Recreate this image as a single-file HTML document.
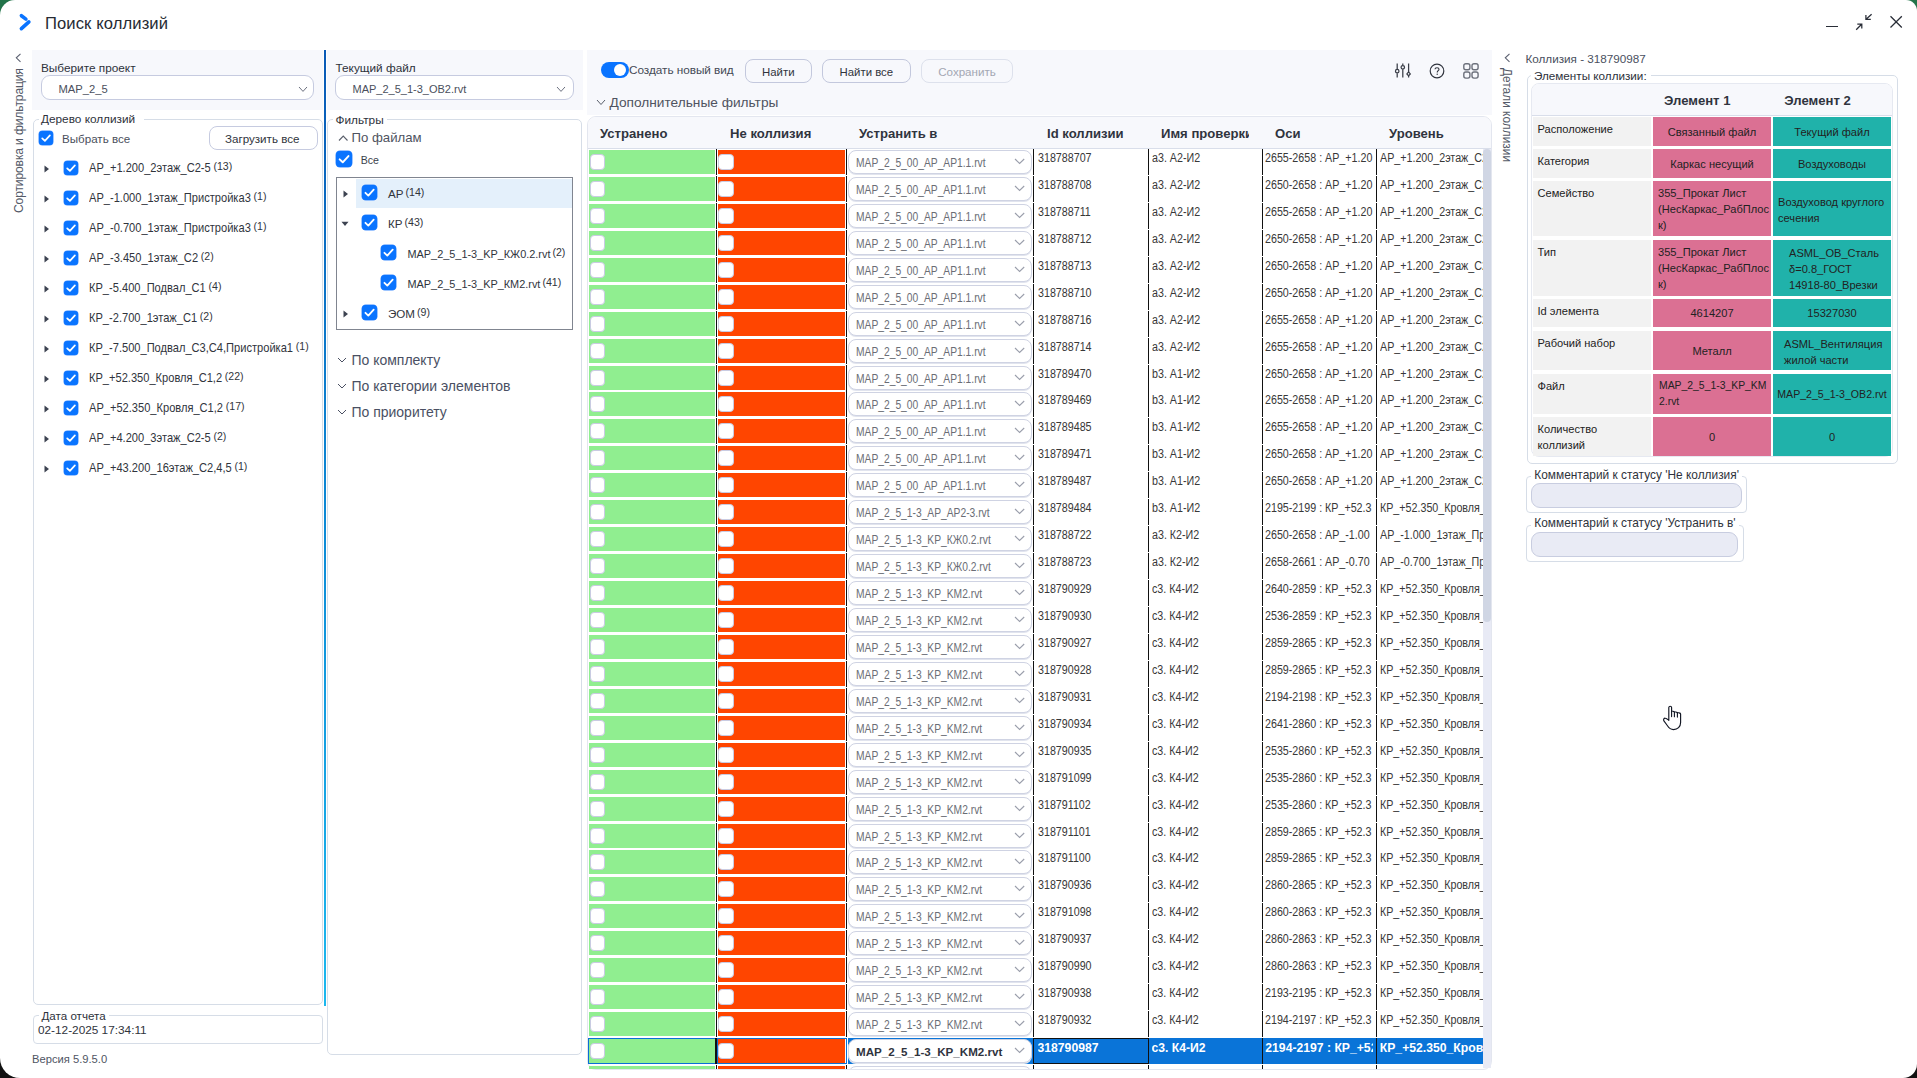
<!DOCTYPE html>
<html><head><meta charset="utf-8"><title>Поиск коллизий</title>
<style>
html,body{margin:0;padding:0;width:1917px;height:1078px;overflow:hidden}
body{background:linear-gradient(#23744a 0,#23744a 50%,#111 50%,#111 100%);font-family:"Liberation Sans",sans-serif}
#win{position:absolute;left:0;top:0;width:1917px;height:1078px;background:#fff;border-radius:15px 11px 14px 20px;overflow:hidden}
.a{position:absolute}
.sx{display:inline-block;transform-origin:0 0}
.t{position:absolute;white-space:nowrap;font-family:"Liberation Sans",sans-serif}
.cb{background:#0a74ff;box-shadow:0 0 0 0.5px #3d8bff}
.ucb{width:15.6px;height:16px;background:#fff;border:1px solid #c9cbe2;border-radius:4px;box-sizing:border-box}
.dd{background:#fff;border:1px solid #cfd3e3;border-radius:8px;box-sizing:border-box;box-shadow:0 1px 0 #e1e4ee}
</style></head>
<body><div id="win">
<svg class="a" style="left:16px;top:12px" width="18" height="20" viewBox="0 0 18 20"><g fill="none" stroke="#0a74ff" stroke-width="3.6" stroke-linecap="round"><path d="M5.4 3.7 L9.9 7.1"/><path d="M12.9 9.9 L5.4 16.7"/></g></svg>
<div class="t " style="left:45px;top:16.15px;font-size:16.6px;line-height:16.6px;color:#262a33;font-weight:400;letter-spacing:0.1px">Поиск коллизий</div>
<div class="a" style="left:1826px;top:25.8px;width:12px;height:1.4px;background:#2a2e38"></div>
<svg class="a" style="left:1850px;top:10px" width="26" height="24" viewBox="1850 10 26 24"><g fill="none" stroke="#2a2e38" stroke-width="1.25"><path d="M1856.2 29.8 L1861.6 24.3 M1857.3 24.1 L1861.8 24.1 L1861.8 28.6"/><path d="M1871.6 14.3 L1866.1 19.3 M1870.8 19.4 L1865.9 19.4 L1865.9 15.0"/></g></svg>
<svg class="a" style="left:1888.8px;top:15px" width="14" height="14" viewBox="0 0 14 14"><path d="M1.5 1.2 L12.8 12.5 M12.8 1.2 L1.5 12.5" fill="none" stroke="#2a2e38" stroke-width="1.3"/></svg>
<svg class="a" style="left:15px;top:53px" width="7" height="10" viewBox="0 0 7 10"><path d="M5.5 0.8 L1.3 4.8 L5.5 8.8" fill="none" stroke="#5b6070" stroke-width="1.1"/></svg>
<div class="t" style="left:19.2px;top:212.8px;font-size:12.1px;letter-spacing:-0.15px;line-height:12px;color:#545a68;transform-origin:0 0;transform:rotate(-90deg) translate(0,-6px);white-space:nowrap">Сортировка и фильтрация</div>
<div class="a" style="left:32px;top:50px;width:291px;height:60px;background:#f7f8fc"></div>
<div class="t " style="left:41px;top:62.51px;font-size:11.8px;line-height:11.8px;color:#2e323b;font-weight:400;">Выберите проект</div>
<div class="a" style="left:41px;top:75px;width:273px;height:25px;background:#fff;border:1px solid #c6cbe0;border-radius:9px;box-sizing:border-box"></div>
<div class="t " style="left:58.5px;top:83.52px;font-size:11.2px;line-height:11.2px;color:#4a4f5c;font-weight:400;">MAP_2_5</div>
<svg class="a" style="left:297.8px;top:85.8px" width="10" height="6.4" viewBox="-1 -1 10 6.4"><path d="M0 0 L4.0 4.4 L8 0" fill="none" stroke="#6b7080" stroke-width="1.0"/></svg>
<div class="a" style="left:33px;top:119px;width:290px;height:886px;border:1px solid #d6dde7;border-radius:5px;box-sizing:border-box"></div>
<div class="a" style="left:39px;top:113px;width:105px;height:12px;background:#fff"></div>
<div class="t " style="left:41px;top:114.41px;font-size:11.8px;line-height:11.8px;color:#2e323b;font-weight:400;">Дерево коллизий</div>
<div class="a cb" style="left:39px;top:131px;width:14px;height:14px;border-radius:3.5px"><svg width="14" height="14" viewBox="0 0 14 14" style="position:absolute;left:0;top:0"><path d="M3.2 7.3 L5.9 9.9 L10.9 4.4" fill="none" stroke="#fff" stroke-width="1.7" stroke-linecap="round" stroke-linejoin="round"/></svg></div>
<div class="t " style="left:62px;top:133.18px;font-size:11.6px;line-height:11.6px;color:#4a4f5c;font-weight:400;">Выбрать все</div>
<div class="a" style="left:209px;top:126px;width:109px;height:24px;background:#fff;border:1px solid #c6cbe0;border-radius:8px;box-sizing:border-box"></div>
<div class="t " style="left:225px;top:133.18px;font-size:11.6px;line-height:11.6px;color:#30343c;font-weight:400;">Загрузить все</div>
<svg class="a" style="left:43.5px;top:165px" width="6" height="8" viewBox="0 0 6 8"><path d="M0.5 0.5 L5 4 L0.5 7.5 Z" fill="#3c4250"/></svg>
<div class="a cb" style="left:64px;top:161px;width:14px;height:14px;border-radius:3.5px"><svg width="14" height="14" viewBox="0 0 14 14" style="position:absolute;left:0;top:0"><path d="M3.2 7.3 L5.9 9.9 L10.9 4.4" fill="none" stroke="#fff" stroke-width="1.7" stroke-linecap="round" stroke-linejoin="round"/></svg></div>
<div class="t" style="left:89px;top:161.8px;font-size:12.2px;line-height:12px;color:#30343c;white-space:nowrap"><span class="sx" style="transform:scaleX(0.91)">АР_+1.200_2этаж_С2-5<span style="font-size:11.6px;position:relative;top:-1.5px;margin-left:3px">(13)</span></span></div>
<svg class="a" style="left:43.5px;top:195px" width="6" height="8" viewBox="0 0 6 8"><path d="M0.5 0.5 L5 4 L0.5 7.5 Z" fill="#3c4250"/></svg>
<div class="a cb" style="left:64px;top:191px;width:14px;height:14px;border-radius:3.5px"><svg width="14" height="14" viewBox="0 0 14 14" style="position:absolute;left:0;top:0"><path d="M3.2 7.3 L5.9 9.9 L10.9 4.4" fill="none" stroke="#fff" stroke-width="1.7" stroke-linecap="round" stroke-linejoin="round"/></svg></div>
<div class="t" style="left:89px;top:191.8px;font-size:12.2px;line-height:12px;color:#30343c;white-space:nowrap"><span class="sx" style="transform:scaleX(0.91)">АР_-1.000_1этаж_Пристройка3<span style="font-size:11.6px;position:relative;top:-1.5px;margin-left:3px">(1)</span></span></div>
<svg class="a" style="left:43.5px;top:225px" width="6" height="8" viewBox="0 0 6 8"><path d="M0.5 0.5 L5 4 L0.5 7.5 Z" fill="#3c4250"/></svg>
<div class="a cb" style="left:64px;top:221px;width:14px;height:14px;border-radius:3.5px"><svg width="14" height="14" viewBox="0 0 14 14" style="position:absolute;left:0;top:0"><path d="M3.2 7.3 L5.9 9.9 L10.9 4.4" fill="none" stroke="#fff" stroke-width="1.7" stroke-linecap="round" stroke-linejoin="round"/></svg></div>
<div class="t" style="left:89px;top:221.8px;font-size:12.2px;line-height:12px;color:#30343c;white-space:nowrap"><span class="sx" style="transform:scaleX(0.91)">АР_-0.700_1этаж_Пристройка3<span style="font-size:11.6px;position:relative;top:-1.5px;margin-left:3px">(1)</span></span></div>
<svg class="a" style="left:43.5px;top:255px" width="6" height="8" viewBox="0 0 6 8"><path d="M0.5 0.5 L5 4 L0.5 7.5 Z" fill="#3c4250"/></svg>
<div class="a cb" style="left:64px;top:251px;width:14px;height:14px;border-radius:3.5px"><svg width="14" height="14" viewBox="0 0 14 14" style="position:absolute;left:0;top:0"><path d="M3.2 7.3 L5.9 9.9 L10.9 4.4" fill="none" stroke="#fff" stroke-width="1.7" stroke-linecap="round" stroke-linejoin="round"/></svg></div>
<div class="t" style="left:89px;top:251.8px;font-size:12.2px;line-height:12px;color:#30343c;white-space:nowrap"><span class="sx" style="transform:scaleX(0.91)">АР_-3.450_1этаж_С2<span style="font-size:11.6px;position:relative;top:-1.5px;margin-left:3px">(2)</span></span></div>
<svg class="a" style="left:43.5px;top:285px" width="6" height="8" viewBox="0 0 6 8"><path d="M0.5 0.5 L5 4 L0.5 7.5 Z" fill="#3c4250"/></svg>
<div class="a cb" style="left:64px;top:281px;width:14px;height:14px;border-radius:3.5px"><svg width="14" height="14" viewBox="0 0 14 14" style="position:absolute;left:0;top:0"><path d="M3.2 7.3 L5.9 9.9 L10.9 4.4" fill="none" stroke="#fff" stroke-width="1.7" stroke-linecap="round" stroke-linejoin="round"/></svg></div>
<div class="t" style="left:89px;top:281.8px;font-size:12.2px;line-height:12px;color:#30343c;white-space:nowrap"><span class="sx" style="transform:scaleX(0.91)">КР_-5.400_Подвал_С1<span style="font-size:11.6px;position:relative;top:-1.5px;margin-left:3px">(4)</span></span></div>
<svg class="a" style="left:43.5px;top:315px" width="6" height="8" viewBox="0 0 6 8"><path d="M0.5 0.5 L5 4 L0.5 7.5 Z" fill="#3c4250"/></svg>
<div class="a cb" style="left:64px;top:311px;width:14px;height:14px;border-radius:3.5px"><svg width="14" height="14" viewBox="0 0 14 14" style="position:absolute;left:0;top:0"><path d="M3.2 7.3 L5.9 9.9 L10.9 4.4" fill="none" stroke="#fff" stroke-width="1.7" stroke-linecap="round" stroke-linejoin="round"/></svg></div>
<div class="t" style="left:89px;top:311.8px;font-size:12.2px;line-height:12px;color:#30343c;white-space:nowrap"><span class="sx" style="transform:scaleX(0.91)">КР_-2.700_1этаж_С1<span style="font-size:11.6px;position:relative;top:-1.5px;margin-left:3px">(2)</span></span></div>
<svg class="a" style="left:43.5px;top:345px" width="6" height="8" viewBox="0 0 6 8"><path d="M0.5 0.5 L5 4 L0.5 7.5 Z" fill="#3c4250"/></svg>
<div class="a cb" style="left:64px;top:341px;width:14px;height:14px;border-radius:3.5px"><svg width="14" height="14" viewBox="0 0 14 14" style="position:absolute;left:0;top:0"><path d="M3.2 7.3 L5.9 9.9 L10.9 4.4" fill="none" stroke="#fff" stroke-width="1.7" stroke-linecap="round" stroke-linejoin="round"/></svg></div>
<div class="t" style="left:89px;top:341.8px;font-size:12.2px;line-height:12px;color:#30343c;white-space:nowrap"><span class="sx" style="transform:scaleX(0.91)">КР_-7.500_Подвал_С3,С4,Пристройка1<span style="font-size:11.6px;position:relative;top:-1.5px;margin-left:3px">(1)</span></span></div>
<svg class="a" style="left:43.5px;top:375px" width="6" height="8" viewBox="0 0 6 8"><path d="M0.5 0.5 L5 4 L0.5 7.5 Z" fill="#3c4250"/></svg>
<div class="a cb" style="left:64px;top:371px;width:14px;height:14px;border-radius:3.5px"><svg width="14" height="14" viewBox="0 0 14 14" style="position:absolute;left:0;top:0"><path d="M3.2 7.3 L5.9 9.9 L10.9 4.4" fill="none" stroke="#fff" stroke-width="1.7" stroke-linecap="round" stroke-linejoin="round"/></svg></div>
<div class="t" style="left:89px;top:371.8px;font-size:12.2px;line-height:12px;color:#30343c;white-space:nowrap"><span class="sx" style="transform:scaleX(0.91)">КР_+52.350_Кровля_С1,2<span style="font-size:11.6px;position:relative;top:-1.5px;margin-left:3px">(22)</span></span></div>
<svg class="a" style="left:43.5px;top:405px" width="6" height="8" viewBox="0 0 6 8"><path d="M0.5 0.5 L5 4 L0.5 7.5 Z" fill="#3c4250"/></svg>
<div class="a cb" style="left:64px;top:401px;width:14px;height:14px;border-radius:3.5px"><svg width="14" height="14" viewBox="0 0 14 14" style="position:absolute;left:0;top:0"><path d="M3.2 7.3 L5.9 9.9 L10.9 4.4" fill="none" stroke="#fff" stroke-width="1.7" stroke-linecap="round" stroke-linejoin="round"/></svg></div>
<div class="t" style="left:89px;top:401.8px;font-size:12.2px;line-height:12px;color:#30343c;white-space:nowrap"><span class="sx" style="transform:scaleX(0.91)">АР_+52.350_Кровля_С1,2<span style="font-size:11.6px;position:relative;top:-1.5px;margin-left:3px">(17)</span></span></div>
<svg class="a" style="left:43.5px;top:435px" width="6" height="8" viewBox="0 0 6 8"><path d="M0.5 0.5 L5 4 L0.5 7.5 Z" fill="#3c4250"/></svg>
<div class="a cb" style="left:64px;top:431px;width:14px;height:14px;border-radius:3.5px"><svg width="14" height="14" viewBox="0 0 14 14" style="position:absolute;left:0;top:0"><path d="M3.2 7.3 L5.9 9.9 L10.9 4.4" fill="none" stroke="#fff" stroke-width="1.7" stroke-linecap="round" stroke-linejoin="round"/></svg></div>
<div class="t" style="left:89px;top:431.8px;font-size:12.2px;line-height:12px;color:#30343c;white-space:nowrap"><span class="sx" style="transform:scaleX(0.91)">АР_+4.200_3этаж_С2-5<span style="font-size:11.6px;position:relative;top:-1.5px;margin-left:3px">(2)</span></span></div>
<svg class="a" style="left:43.5px;top:465px" width="6" height="8" viewBox="0 0 6 8"><path d="M0.5 0.5 L5 4 L0.5 7.5 Z" fill="#3c4250"/></svg>
<div class="a cb" style="left:64px;top:461px;width:14px;height:14px;border-radius:3.5px"><svg width="14" height="14" viewBox="0 0 14 14" style="position:absolute;left:0;top:0"><path d="M3.2 7.3 L5.9 9.9 L10.9 4.4" fill="none" stroke="#fff" stroke-width="1.7" stroke-linecap="round" stroke-linejoin="round"/></svg></div>
<div class="t" style="left:89px;top:461.8px;font-size:12.2px;line-height:12px;color:#30343c;white-space:nowrap"><span class="sx" style="transform:scaleX(0.91)">АР_+43.200_16этаж_С2,4,5<span style="font-size:11.6px;position:relative;top:-1.5px;margin-left:3px">(1)</span></span></div>
<div class="a" style="left:33px;top:1015px;width:290px;height:29px;border:1px solid #d6dde7;border-radius:4px;box-sizing:border-box"></div>
<div class="a" style="left:39px;top:1009px;width:70px;height:10px;background:#fff"></div>
<div class="t " style="left:41.5px;top:1009.88px;font-size:11.6px;line-height:11.6px;color:#2e323b;font-weight:400;">Дата отчета</div>
<div class="t " style="left:38px;top:1025.31px;font-size:11.8px;line-height:11.8px;color:#30343c;font-weight:400;">02-12-2025 17:34:11</div>
<div class="t " style="left:32px;top:1053.82px;font-size:11.2px;line-height:11.2px;color:#4f5563;font-weight:400;">Версия 5.9.5.0</div>
<div class="a" style="left:324px;top:50px;width:2px;height:956px;background:linear-gradient(#0a5ab6,#0c8ad6 50%,#1cb8ee)"></div>
<div class="a" style="left:327px;top:50px;width:256px;height:60px;background:#f7f8fc"></div>
<div class="t " style="left:335.5px;top:62.51px;font-size:11.8px;line-height:11.8px;color:#2e323b;font-weight:400;">Текущий файл</div>
<div class="a" style="left:335px;top:75px;width:239px;height:25px;background:#fff;border:1px solid #c6cbe0;border-radius:9px;box-sizing:border-box"></div>
<div class="t " style="left:352.5px;top:83.69px;font-size:11.0px;line-height:11.0px;color:#4a4f5c;font-weight:400;">MAP_2_5_1-3_OB2.rvt</div>
<svg class="a" style="left:555.6px;top:85.8px" width="10" height="6.4" viewBox="-1 -1 10 6.4"><path d="M0 0 L4.0 4.4 L8 0" fill="none" stroke="#6b7080" stroke-width="1.0"/></svg>
<div class="a" style="left:327px;top:119px;width:255px;height:936px;border:1px solid #d6dde7;border-radius:5px;box-sizing:border-box"></div>
<div class="a" style="left:333px;top:113px;width:54px;height:12px;background:#fff"></div>
<div class="t " style="left:335.5px;top:114.61px;font-size:11.8px;line-height:11.8px;color:#2e323b;font-weight:400;">Фильтры</div>
<svg class="a" style="left:337.5px;top:134.5px" width="10.5" height="6.5" viewBox="-1 -1 10.5 6.5"><path d="M0 4.5 L4.25 0 L8.5 4.5" fill="none" stroke="#5a5f6b" stroke-width="1.1"/></svg>
<div class="t " style="left:351.5px;top:130.83px;font-size:13.2px;line-height:13.2px;color:#4f5360;font-weight:400;">По файлам</div>
<div class="a cb" style="left:336px;top:151px;width:16px;height:16px;border-radius:4.0px"><svg width="16" height="16" viewBox="0 0 14 14" style="position:absolute;left:0;top:0"><path d="M3.2 7.3 L5.9 9.9 L10.9 4.4" fill="none" stroke="#fff" stroke-width="1.7" stroke-linecap="round" stroke-linejoin="round"/></svg></div>
<div class="t " style="left:360.7px;top:154.83px;font-size:10.6px;line-height:10.6px;color:#3a3f4c;font-weight:400;">Все</div>
<div class="a" style="left:336px;top:177px;width:237px;height:153px;border:1px solid #808590;box-sizing:border-box"></div>
<div class="a" style="left:356px;top:179px;width:216px;height:29px;background:#e4f0fb"></div>
<svg class="a" style="left:342.5px;top:190px" width="6" height="8" viewBox="0 0 6 8"><path d="M0.5 0.5 L5 4 L0.5 7.5 Z" fill="#3c4250"/></svg>
<div class="a cb" style="left:362px;top:185px;width:15px;height:15px;border-radius:3.75px"><svg width="15" height="15" viewBox="0 0 14 14" style="position:absolute;left:0;top:0"><path d="M3.2 7.3 L5.9 9.9 L10.9 4.4" fill="none" stroke="#fff" stroke-width="1.7" stroke-linecap="round" stroke-linejoin="round"/></svg></div>
<div class="t" style="left:388px;top:187.5px;font-size:11.6px;line-height:12px;color:#30343c;white-space:nowrap">АР<span style="font-size:10.6px;position:relative;top:-1.5px;margin-left:2px">(14)</span></div>
<svg class="a" style="left:341px;top:221px" width="8" height="6" viewBox="0 0 8 6"><path d="M0.5 0.8 L7.5 0.8 L4 5 Z" fill="#3c4250"/></svg>
<div class="a cb" style="left:362px;top:215px;width:15px;height:15px;border-radius:3.75px"><svg width="15" height="15" viewBox="0 0 14 14" style="position:absolute;left:0;top:0"><path d="M3.2 7.3 L5.9 9.9 L10.9 4.4" fill="none" stroke="#fff" stroke-width="1.7" stroke-linecap="round" stroke-linejoin="round"/></svg></div>
<div class="t" style="left:388px;top:217.5px;font-size:11.6px;line-height:12px;color:#30343c;white-space:nowrap">КР<span style="font-size:10.6px;position:relative;top:-1.5px;margin-left:2px">(43)</span></div>
<div class="a cb" style="left:381px;top:245px;width:15px;height:15px;border-radius:3.75px"><svg width="15" height="15" viewBox="0 0 14 14" style="position:absolute;left:0;top:0"><path d="M3.2 7.3 L5.9 9.9 L10.9 4.4" fill="none" stroke="#fff" stroke-width="1.7" stroke-linecap="round" stroke-linejoin="round"/></svg></div>
<div class="t" style="left:407.5px;top:247.5px;font-size:10.9px;line-height:12px;color:#30343c;white-space:nowrap">MAP_2_5_1-3_KP_КЖ0.2.rvt<span style="font-size:10.6px;position:relative;top:-1.5px;margin-left:2px">(2)</span></div>
<div class="a cb" style="left:381px;top:275px;width:15px;height:15px;border-radius:3.75px"><svg width="15" height="15" viewBox="0 0 14 14" style="position:absolute;left:0;top:0"><path d="M3.2 7.3 L5.9 9.9 L10.9 4.4" fill="none" stroke="#fff" stroke-width="1.7" stroke-linecap="round" stroke-linejoin="round"/></svg></div>
<div class="t" style="left:407.5px;top:277.5px;font-size:10.9px;line-height:12px;color:#30343c;white-space:nowrap">MAP_2_5_1-3_KP_КМ2.rvt<span style="font-size:10.6px;position:relative;top:-1.5px;margin-left:2px">(41)</span></div>
<svg class="a" style="left:342.5px;top:310px" width="6" height="8" viewBox="0 0 6 8"><path d="M0.5 0.5 L5 4 L0.5 7.5 Z" fill="#3c4250"/></svg>
<div class="a cb" style="left:362px;top:305px;width:15px;height:15px;border-radius:3.75px"><svg width="15" height="15" viewBox="0 0 14 14" style="position:absolute;left:0;top:0"><path d="M3.2 7.3 L5.9 9.9 L10.9 4.4" fill="none" stroke="#fff" stroke-width="1.7" stroke-linecap="round" stroke-linejoin="round"/></svg></div>
<div class="t" style="left:388px;top:307.5px;font-size:11.6px;line-height:12px;color:#30343c;white-space:nowrap">ЭОМ<span style="font-size:10.6px;position:relative;top:-1.5px;margin-left:2px">(9)</span></div>
<svg class="a" style="left:337.4px;top:356.5px" width="10" height="6" viewBox="-1 -1 10 6"><path d="M0 0 L4.0 4 L8 0" fill="none" stroke="#4a5063" stroke-width="1.0"/></svg>
<div class="t " style="left:351.4px;top:352.65px;font-size:14px;line-height:14px;color:#4a5063;font-weight:400;">По комплекту</div>
<svg class="a" style="left:337.4px;top:382.5px" width="10" height="6" viewBox="-1 -1 10 6"><path d="M0 0 L4.0 4 L8 0" fill="none" stroke="#4a5063" stroke-width="1.0"/></svg>
<div class="t " style="left:351.4px;top:378.65px;font-size:14px;line-height:14px;color:#4a5063;font-weight:400;">По категории элементов</div>
<svg class="a" style="left:337.4px;top:408.5px" width="10" height="6" viewBox="-1 -1 10 6"><path d="M0 0 L4.0 4 L8 0" fill="none" stroke="#4a5063" stroke-width="1.0"/></svg>
<div class="t " style="left:351.4px;top:404.65px;font-size:14px;line-height:14px;color:#4a5063;font-weight:400;">По приоритету</div>
<div class="a" style="left:587px;top:50px;width:905px;height:65px;background:#f7f8fc"></div>
<div class="a" style="left:601px;top:62px;width:28px;height:16px;background:#0a74ff;border-radius:8px"></div>
<div class="a" style="left:614px;top:64px;width:12px;height:12px;background:#fff;border-radius:6px"></div>
<div class="t " style="left:629px;top:65.01px;font-size:11.8px;line-height:11.8px;color:#454a56;font-weight:400;letter-spacing:-0.05px">Создать новый вид</div>
<div class="a" style="left:745px;top:59px;width:67px;height:24px;background:#fff0;border:1px solid #c3c8dd;border-radius:8px;box-sizing:border-box"></div>
<div class="t " style="left:762px;top:66.75px;font-size:11.4px;line-height:11.4px;color:#30343c;font-weight:400;">Найти</div>
<div class="a" style="left:822px;top:59px;width:89px;height:24px;border:1px solid #c3c8dd;border-radius:8px;box-sizing:border-box"></div>
<div class="t " style="left:839.5px;top:66.75px;font-size:11.4px;line-height:11.4px;color:#30343c;font-weight:400;">Найти все</div>
<div class="a" style="left:921px;top:59px;width:92px;height:24px;border:1px solid #dde1ec;border-radius:8px;box-sizing:border-box"></div>
<div class="t " style="left:938.2px;top:65.98px;font-size:11.6px;line-height:11.6px;color:#a3a7b3;font-weight:400;">Сохранить</div>
<svg class="a" style="left:596.4px;top:99.3px" width="10" height="6.5" viewBox="-1 -1 10 6.5"><path d="M0 0 L4.0 4.5 L8 0" fill="none" stroke="#5a5f6b" stroke-width="1.0"/></svg>
<div class="t " style="left:609.5px;top:95.80px;font-size:13.7px;line-height:13.7px;color:#4f5360;font-weight:400;">Дополнительные фильтры</div>
<svg class="a" style="left:1392px;top:61px" width="22" height="20" viewBox="0 0 22 20"><g fill="none" stroke="#3a3e48" stroke-width="1.25"><path d="M5.2 2.5 V8.2 M5.2 12.2 V16.5"/><circle cx="5.2" cy="10.2" r="1.75" fill="#f7f8fc"/><path d="M10.8 2.5 V4.3 M10.8 8.3 V16.5"/><circle cx="10.8" cy="6.3" r="1.75" fill="#f7f8fc"/><path d="M16.6 2.5 V10.9 M16.6 14.9 V16.5"/><path d="M16.6 10.9 L14.9 12.9 L16.6 14.9 L18.3 12.9 Z" fill="#f7f8fc"/></g></svg>
<svg class="a" style="left:1428px;top:62px" width="18" height="18" viewBox="0 0 18 18"><circle cx="9" cy="9" r="6.8" fill="none" stroke="#30343e" stroke-width="1.2"/><path d="M7 7.3 C7 5.2 11 5.2 11 7.3 C11 8.6 9.2 8.8 9.2 10.4" fill="none" stroke="#30343e" stroke-width="1.1"/><circle cx="9.2" cy="12.3" r="0.7" fill="#30343e"/></svg>
<svg class="a" style="left:1462px;top:62px" width="18" height="18" viewBox="0 0 18 18"><g fill="none" stroke="#6d717c" stroke-width="1.4"><rect x="1.8" y="1.7" width="6.1" height="6.1" rx="2"/><rect x="10" y="1.7" width="6.1" height="6.1" rx="2"/><rect x="1.8" y="10" width="6.1" height="6.1" rx="2"/><rect x="10" y="10" width="6.1" height="6.1" rx="2"/></g></svg>
<div class="a" style="left:587px;top:116px;width:905px;height:954px;border:1px solid #e3e6ef;border-radius:9px;box-sizing:border-box;overflow:hidden;background:#fff"></div>
<div class="a" style="left:588px;top:117px;width:903px;height:31px;background:#f7f8fc;border-radius:8px 8px 0 0"></div>
<div class="a" style="left:588px;top:148px;width:903px;height:1px;background:#d9deea"></div>
<div class="t " style="left:600px;top:126.91px;font-size:13.1px;line-height:13.1px;color:#30343e;font-weight:700;white-space:nowrap">Устранено</div>
<div class="t " style="left:730px;top:126.91px;font-size:13.1px;line-height:13.1px;color:#30343e;font-weight:700;white-space:nowrap">Не коллизия</div>
<div class="t " style="left:859px;top:126.91px;font-size:13.1px;line-height:13.1px;color:#30343e;font-weight:700;white-space:nowrap">Устранить в</div>
<div class="t " style="left:1047px;top:126.91px;font-size:13.1px;line-height:13.1px;color:#30343e;font-weight:700;white-space:nowrap">Id коллизии</div>
<div class="t " style="left:1161px;top:126.91px;font-size:13.1px;line-height:13.1px;color:#30343e;font-weight:700;width:87.5px;overflow:hidden;white-space:nowrap">Имя проверки</div>
<div class="t " style="left:1275px;top:126.91px;font-size:13.1px;line-height:13.1px;color:#30343e;font-weight:700;white-space:nowrap">Оси</div>
<div class="t " style="left:1389px;top:126.91px;font-size:13.1px;line-height:13.1px;color:#30343e;font-weight:700;white-space:nowrap">Уровень</div>
<div class="a" style="left:588px;top:149px;width:895px;height:920px;overflow:hidden">
<div class="a" style="left:128px;top:0px;width:1px;height:26px;background:#111"></div>
<div class="a" style="left:258px;top:0px;width:1px;height:26px;background:#111"></div>
<div class="a" style="left:445px;top:0px;width:1px;height:26px;background:#111"></div>
<div class="a" style="left:560px;top:0px;width:1px;height:26px;background:#111"></div>
<div class="a" style="left:674px;top:0px;width:1px;height:26px;background:#111"></div>
<div class="a" style="left:788px;top:0px;width:1px;height:26px;background:#111"></div>
<div class="a" style="left:1px;top:1px;width:126px;height:24px;background:#90ee90"></div>
<div class="a" style="left:130px;top:1px;width:127px;height:24px;background:#ff4500"></div>
<div class="a ucb" style="left:1.5px;top:5px"></div>
<div class="a ucb" style="left:130.29999999999995px;top:5px"></div>
<div class="a dd" style="left:260px;top:1px;width:184px;height:24px"></div>
<div class="t" style="left:268px;top:7.9px;font-size:12.3px;line-height:12px;color:#6a6d75;white-space:nowrap"><span class="sx" style="transform:scaleX(0.835)">MAP_2_5_00_AP_AP1.1.rvt</span></div>
<svg class="a" style="left:426px;top:9px" width="11" height="7" viewBox="-1 -1 11 7"><path d="M0 0 L4.6 4.4 L9.2 0" fill="none" stroke="#9a9eab" stroke-width="1.1"/></svg>
<div class="t" style="left:449.5px;top:3.1px;width:108px;height:18px;overflow:hidden;font-size:12.3px;line-height:12px;color:#383838;white-space:nowrap"><span class="sx" style="transform:scaleX(0.87)">318788707</span></div>
<div class="t" style="left:563.5px;top:3.1px;width:108px;height:18px;overflow:hidden;font-size:12.3px;line-height:12px;color:#383838;white-space:nowrap"><span class="sx" style="transform:scaleX(0.87)">а3. А2-И2</span></div>
<div class="t" style="left:677.3px;top:3.1px;width:108px;height:18px;overflow:hidden;font-size:12.3px;line-height:12px;color:#383838;white-space:nowrap"><span class="sx" style="transform:scaleX(0.87)">2655-2658 : АР_+1.20</span></div>
<div class="t" style="left:791.8px;top:3.1px;width:103px;height:18px;overflow:hidden;font-size:12.3px;line-height:12px;color:#383838;white-space:nowrap"><span class="sx" style="transform:scaleX(0.87)">АР_+1.200_2этаж_С2</span></div>
<div class="a" style="left:128px;top:27px;width:1px;height:26px;background:#111"></div>
<div class="a" style="left:258px;top:27px;width:1px;height:26px;background:#111"></div>
<div class="a" style="left:445px;top:27px;width:1px;height:26px;background:#111"></div>
<div class="a" style="left:560px;top:27px;width:1px;height:26px;background:#111"></div>
<div class="a" style="left:674px;top:27px;width:1px;height:26px;background:#111"></div>
<div class="a" style="left:788px;top:27px;width:1px;height:26px;background:#111"></div>
<div class="a" style="left:1px;top:28px;width:126px;height:24px;background:#90ee90"></div>
<div class="a" style="left:130px;top:28px;width:127px;height:24px;background:#ff4500"></div>
<div class="a ucb" style="left:1.5px;top:32px"></div>
<div class="a ucb" style="left:130.29999999999995px;top:32px"></div>
<div class="a dd" style="left:260px;top:28px;width:184px;height:24px"></div>
<div class="t" style="left:268px;top:34.9px;font-size:12.3px;line-height:12px;color:#6a6d75;white-space:nowrap"><span class="sx" style="transform:scaleX(0.835)">MAP_2_5_00_AP_AP1.1.rvt</span></div>
<svg class="a" style="left:426px;top:36px" width="11" height="7" viewBox="-1 -1 11 7"><path d="M0 0 L4.6 4.4 L9.2 0" fill="none" stroke="#9a9eab" stroke-width="1.1"/></svg>
<div class="t" style="left:449.5px;top:30.1px;width:108px;height:18px;overflow:hidden;font-size:12.3px;line-height:12px;color:#383838;white-space:nowrap"><span class="sx" style="transform:scaleX(0.87)">318788708</span></div>
<div class="t" style="left:563.5px;top:30.1px;width:108px;height:18px;overflow:hidden;font-size:12.3px;line-height:12px;color:#383838;white-space:nowrap"><span class="sx" style="transform:scaleX(0.87)">а3. А2-И2</span></div>
<div class="t" style="left:677.3px;top:30.1px;width:108px;height:18px;overflow:hidden;font-size:12.3px;line-height:12px;color:#383838;white-space:nowrap"><span class="sx" style="transform:scaleX(0.87)">2650-2658 : АР_+1.20</span></div>
<div class="t" style="left:791.8px;top:30.1px;width:103px;height:18px;overflow:hidden;font-size:12.3px;line-height:12px;color:#383838;white-space:nowrap"><span class="sx" style="transform:scaleX(0.87)">АР_+1.200_2этаж_С2</span></div>
<div class="a" style="left:128px;top:54px;width:1px;height:26px;background:#111"></div>
<div class="a" style="left:258px;top:54px;width:1px;height:26px;background:#111"></div>
<div class="a" style="left:445px;top:54px;width:1px;height:26px;background:#111"></div>
<div class="a" style="left:560px;top:54px;width:1px;height:26px;background:#111"></div>
<div class="a" style="left:674px;top:54px;width:1px;height:26px;background:#111"></div>
<div class="a" style="left:788px;top:54px;width:1px;height:26px;background:#111"></div>
<div class="a" style="left:1px;top:55px;width:126px;height:24px;background:#90ee90"></div>
<div class="a" style="left:130px;top:55px;width:127px;height:24px;background:#ff4500"></div>
<div class="a ucb" style="left:1.5px;top:59px"></div>
<div class="a ucb" style="left:130.29999999999995px;top:59px"></div>
<div class="a dd" style="left:260px;top:55px;width:184px;height:24px"></div>
<div class="t" style="left:268px;top:61.9px;font-size:12.3px;line-height:12px;color:#6a6d75;white-space:nowrap"><span class="sx" style="transform:scaleX(0.835)">MAP_2_5_00_AP_AP1.1.rvt</span></div>
<svg class="a" style="left:426px;top:63px" width="11" height="7" viewBox="-1 -1 11 7"><path d="M0 0 L4.6 4.4 L9.2 0" fill="none" stroke="#9a9eab" stroke-width="1.1"/></svg>
<div class="t" style="left:449.5px;top:57.1px;width:108px;height:18px;overflow:hidden;font-size:12.3px;line-height:12px;color:#383838;white-space:nowrap"><span class="sx" style="transform:scaleX(0.87)">318788711</span></div>
<div class="t" style="left:563.5px;top:57.1px;width:108px;height:18px;overflow:hidden;font-size:12.3px;line-height:12px;color:#383838;white-space:nowrap"><span class="sx" style="transform:scaleX(0.87)">а3. А2-И2</span></div>
<div class="t" style="left:677.3px;top:57.1px;width:108px;height:18px;overflow:hidden;font-size:12.3px;line-height:12px;color:#383838;white-space:nowrap"><span class="sx" style="transform:scaleX(0.87)">2655-2658 : АР_+1.20</span></div>
<div class="t" style="left:791.8px;top:57.1px;width:103px;height:18px;overflow:hidden;font-size:12.3px;line-height:12px;color:#383838;white-space:nowrap"><span class="sx" style="transform:scaleX(0.87)">АР_+1.200_2этаж_С2</span></div>
<div class="a" style="left:128px;top:81px;width:1px;height:26px;background:#111"></div>
<div class="a" style="left:258px;top:81px;width:1px;height:26px;background:#111"></div>
<div class="a" style="left:445px;top:81px;width:1px;height:26px;background:#111"></div>
<div class="a" style="left:560px;top:81px;width:1px;height:26px;background:#111"></div>
<div class="a" style="left:674px;top:81px;width:1px;height:26px;background:#111"></div>
<div class="a" style="left:788px;top:81px;width:1px;height:26px;background:#111"></div>
<div class="a" style="left:1px;top:82px;width:126px;height:24px;background:#90ee90"></div>
<div class="a" style="left:130px;top:82px;width:127px;height:24px;background:#ff4500"></div>
<div class="a ucb" style="left:1.5px;top:86px"></div>
<div class="a ucb" style="left:130.29999999999995px;top:86px"></div>
<div class="a dd" style="left:260px;top:82px;width:184px;height:24px"></div>
<div class="t" style="left:268px;top:88.9px;font-size:12.3px;line-height:12px;color:#6a6d75;white-space:nowrap"><span class="sx" style="transform:scaleX(0.835)">MAP_2_5_00_AP_AP1.1.rvt</span></div>
<svg class="a" style="left:426px;top:90px" width="11" height="7" viewBox="-1 -1 11 7"><path d="M0 0 L4.6 4.4 L9.2 0" fill="none" stroke="#9a9eab" stroke-width="1.1"/></svg>
<div class="t" style="left:449.5px;top:84.1px;width:108px;height:18px;overflow:hidden;font-size:12.3px;line-height:12px;color:#383838;white-space:nowrap"><span class="sx" style="transform:scaleX(0.87)">318788712</span></div>
<div class="t" style="left:563.5px;top:84.1px;width:108px;height:18px;overflow:hidden;font-size:12.3px;line-height:12px;color:#383838;white-space:nowrap"><span class="sx" style="transform:scaleX(0.87)">а3. А2-И2</span></div>
<div class="t" style="left:677.3px;top:84.1px;width:108px;height:18px;overflow:hidden;font-size:12.3px;line-height:12px;color:#383838;white-space:nowrap"><span class="sx" style="transform:scaleX(0.87)">2650-2658 : АР_+1.20</span></div>
<div class="t" style="left:791.8px;top:84.1px;width:103px;height:18px;overflow:hidden;font-size:12.3px;line-height:12px;color:#383838;white-space:nowrap"><span class="sx" style="transform:scaleX(0.87)">АР_+1.200_2этаж_С2</span></div>
<div class="a" style="left:128px;top:108px;width:1px;height:26px;background:#111"></div>
<div class="a" style="left:258px;top:108px;width:1px;height:26px;background:#111"></div>
<div class="a" style="left:445px;top:108px;width:1px;height:26px;background:#111"></div>
<div class="a" style="left:560px;top:108px;width:1px;height:26px;background:#111"></div>
<div class="a" style="left:674px;top:108px;width:1px;height:26px;background:#111"></div>
<div class="a" style="left:788px;top:108px;width:1px;height:26px;background:#111"></div>
<div class="a" style="left:1px;top:109px;width:126px;height:24px;background:#90ee90"></div>
<div class="a" style="left:130px;top:109px;width:127px;height:24px;background:#ff4500"></div>
<div class="a ucb" style="left:1.5px;top:113px"></div>
<div class="a ucb" style="left:130.29999999999995px;top:113px"></div>
<div class="a dd" style="left:260px;top:109px;width:184px;height:24px"></div>
<div class="t" style="left:268px;top:115.9px;font-size:12.3px;line-height:12px;color:#6a6d75;white-space:nowrap"><span class="sx" style="transform:scaleX(0.835)">MAP_2_5_00_AP_AP1.1.rvt</span></div>
<svg class="a" style="left:426px;top:117px" width="11" height="7" viewBox="-1 -1 11 7"><path d="M0 0 L4.6 4.4 L9.2 0" fill="none" stroke="#9a9eab" stroke-width="1.1"/></svg>
<div class="t" style="left:449.5px;top:111.1px;width:108px;height:18px;overflow:hidden;font-size:12.3px;line-height:12px;color:#383838;white-space:nowrap"><span class="sx" style="transform:scaleX(0.87)">318788713</span></div>
<div class="t" style="left:563.5px;top:111.1px;width:108px;height:18px;overflow:hidden;font-size:12.3px;line-height:12px;color:#383838;white-space:nowrap"><span class="sx" style="transform:scaleX(0.87)">а3. А2-И2</span></div>
<div class="t" style="left:677.3px;top:111.1px;width:108px;height:18px;overflow:hidden;font-size:12.3px;line-height:12px;color:#383838;white-space:nowrap"><span class="sx" style="transform:scaleX(0.87)">2650-2658 : АР_+1.20</span></div>
<div class="t" style="left:791.8px;top:111.1px;width:103px;height:18px;overflow:hidden;font-size:12.3px;line-height:12px;color:#383838;white-space:nowrap"><span class="sx" style="transform:scaleX(0.87)">АР_+1.200_2этаж_С2</span></div>
<div class="a" style="left:128px;top:135px;width:1px;height:26px;background:#111"></div>
<div class="a" style="left:258px;top:135px;width:1px;height:26px;background:#111"></div>
<div class="a" style="left:445px;top:135px;width:1px;height:26px;background:#111"></div>
<div class="a" style="left:560px;top:135px;width:1px;height:26px;background:#111"></div>
<div class="a" style="left:674px;top:135px;width:1px;height:26px;background:#111"></div>
<div class="a" style="left:788px;top:135px;width:1px;height:26px;background:#111"></div>
<div class="a" style="left:1px;top:136px;width:126px;height:24px;background:#90ee90"></div>
<div class="a" style="left:130px;top:136px;width:127px;height:24px;background:#ff4500"></div>
<div class="a ucb" style="left:1.5px;top:140px"></div>
<div class="a ucb" style="left:130.29999999999995px;top:140px"></div>
<div class="a dd" style="left:260px;top:136px;width:184px;height:24px"></div>
<div class="t" style="left:268px;top:142.9px;font-size:12.3px;line-height:12px;color:#6a6d75;white-space:nowrap"><span class="sx" style="transform:scaleX(0.835)">MAP_2_5_00_AP_AP1.1.rvt</span></div>
<svg class="a" style="left:426px;top:144px" width="11" height="7" viewBox="-1 -1 11 7"><path d="M0 0 L4.6 4.4 L9.2 0" fill="none" stroke="#9a9eab" stroke-width="1.1"/></svg>
<div class="t" style="left:449.5px;top:138.1px;width:108px;height:18px;overflow:hidden;font-size:12.3px;line-height:12px;color:#383838;white-space:nowrap"><span class="sx" style="transform:scaleX(0.87)">318788710</span></div>
<div class="t" style="left:563.5px;top:138.1px;width:108px;height:18px;overflow:hidden;font-size:12.3px;line-height:12px;color:#383838;white-space:nowrap"><span class="sx" style="transform:scaleX(0.87)">а3. А2-И2</span></div>
<div class="t" style="left:677.3px;top:138.1px;width:108px;height:18px;overflow:hidden;font-size:12.3px;line-height:12px;color:#383838;white-space:nowrap"><span class="sx" style="transform:scaleX(0.87)">2650-2658 : АР_+1.20</span></div>
<div class="t" style="left:791.8px;top:138.1px;width:103px;height:18px;overflow:hidden;font-size:12.3px;line-height:12px;color:#383838;white-space:nowrap"><span class="sx" style="transform:scaleX(0.87)">АР_+1.200_2этаж_С2</span></div>
<div class="a" style="left:128px;top:162px;width:1px;height:26px;background:#111"></div>
<div class="a" style="left:258px;top:162px;width:1px;height:26px;background:#111"></div>
<div class="a" style="left:445px;top:162px;width:1px;height:26px;background:#111"></div>
<div class="a" style="left:560px;top:162px;width:1px;height:26px;background:#111"></div>
<div class="a" style="left:674px;top:162px;width:1px;height:26px;background:#111"></div>
<div class="a" style="left:788px;top:162px;width:1px;height:26px;background:#111"></div>
<div class="a" style="left:1px;top:163px;width:126px;height:24px;background:#90ee90"></div>
<div class="a" style="left:130px;top:163px;width:127px;height:24px;background:#ff4500"></div>
<div class="a ucb" style="left:1.5px;top:167px"></div>
<div class="a ucb" style="left:130.29999999999995px;top:167px"></div>
<div class="a dd" style="left:260px;top:163px;width:184px;height:24px"></div>
<div class="t" style="left:268px;top:169.9px;font-size:12.3px;line-height:12px;color:#6a6d75;white-space:nowrap"><span class="sx" style="transform:scaleX(0.835)">MAP_2_5_00_AP_AP1.1.rvt</span></div>
<svg class="a" style="left:426px;top:171px" width="11" height="7" viewBox="-1 -1 11 7"><path d="M0 0 L4.6 4.4 L9.2 0" fill="none" stroke="#9a9eab" stroke-width="1.1"/></svg>
<div class="t" style="left:449.5px;top:165.1px;width:108px;height:18px;overflow:hidden;font-size:12.3px;line-height:12px;color:#383838;white-space:nowrap"><span class="sx" style="transform:scaleX(0.87)">318788716</span></div>
<div class="t" style="left:563.5px;top:165.1px;width:108px;height:18px;overflow:hidden;font-size:12.3px;line-height:12px;color:#383838;white-space:nowrap"><span class="sx" style="transform:scaleX(0.87)">а3. А2-И2</span></div>
<div class="t" style="left:677.3px;top:165.1px;width:108px;height:18px;overflow:hidden;font-size:12.3px;line-height:12px;color:#383838;white-space:nowrap"><span class="sx" style="transform:scaleX(0.87)">2655-2658 : АР_+1.20</span></div>
<div class="t" style="left:791.8px;top:165.1px;width:103px;height:18px;overflow:hidden;font-size:12.3px;line-height:12px;color:#383838;white-space:nowrap"><span class="sx" style="transform:scaleX(0.87)">АР_+1.200_2этаж_С2</span></div>
<div class="a" style="left:128px;top:189px;width:1px;height:26px;background:#111"></div>
<div class="a" style="left:258px;top:189px;width:1px;height:26px;background:#111"></div>
<div class="a" style="left:445px;top:189px;width:1px;height:26px;background:#111"></div>
<div class="a" style="left:560px;top:189px;width:1px;height:26px;background:#111"></div>
<div class="a" style="left:674px;top:189px;width:1px;height:26px;background:#111"></div>
<div class="a" style="left:788px;top:189px;width:1px;height:26px;background:#111"></div>
<div class="a" style="left:1px;top:190px;width:126px;height:24px;background:#90ee90"></div>
<div class="a" style="left:130px;top:190px;width:127px;height:24px;background:#ff4500"></div>
<div class="a ucb" style="left:1.5px;top:194px"></div>
<div class="a ucb" style="left:130.29999999999995px;top:194px"></div>
<div class="a dd" style="left:260px;top:190px;width:184px;height:24px"></div>
<div class="t" style="left:268px;top:196.9px;font-size:12.3px;line-height:12px;color:#6a6d75;white-space:nowrap"><span class="sx" style="transform:scaleX(0.835)">MAP_2_5_00_AP_AP1.1.rvt</span></div>
<svg class="a" style="left:426px;top:198px" width="11" height="7" viewBox="-1 -1 11 7"><path d="M0 0 L4.6 4.4 L9.2 0" fill="none" stroke="#9a9eab" stroke-width="1.1"/></svg>
<div class="t" style="left:449.5px;top:192.1px;width:108px;height:18px;overflow:hidden;font-size:12.3px;line-height:12px;color:#383838;white-space:nowrap"><span class="sx" style="transform:scaleX(0.87)">318788714</span></div>
<div class="t" style="left:563.5px;top:192.1px;width:108px;height:18px;overflow:hidden;font-size:12.3px;line-height:12px;color:#383838;white-space:nowrap"><span class="sx" style="transform:scaleX(0.87)">а3. А2-И2</span></div>
<div class="t" style="left:677.3px;top:192.1px;width:108px;height:18px;overflow:hidden;font-size:12.3px;line-height:12px;color:#383838;white-space:nowrap"><span class="sx" style="transform:scaleX(0.87)">2655-2658 : АР_+1.20</span></div>
<div class="t" style="left:791.8px;top:192.1px;width:103px;height:18px;overflow:hidden;font-size:12.3px;line-height:12px;color:#383838;white-space:nowrap"><span class="sx" style="transform:scaleX(0.87)">АР_+1.200_2этаж_С2</span></div>
<div class="a" style="left:128px;top:216px;width:1px;height:26px;background:#111"></div>
<div class="a" style="left:258px;top:216px;width:1px;height:26px;background:#111"></div>
<div class="a" style="left:445px;top:216px;width:1px;height:26px;background:#111"></div>
<div class="a" style="left:560px;top:216px;width:1px;height:26px;background:#111"></div>
<div class="a" style="left:674px;top:216px;width:1px;height:26px;background:#111"></div>
<div class="a" style="left:788px;top:216px;width:1px;height:26px;background:#111"></div>
<div class="a" style="left:1px;top:217px;width:126px;height:24px;background:#90ee90"></div>
<div class="a" style="left:130px;top:217px;width:127px;height:24px;background:#ff4500"></div>
<div class="a ucb" style="left:1.5px;top:221px"></div>
<div class="a ucb" style="left:130.29999999999995px;top:221px"></div>
<div class="a dd" style="left:260px;top:217px;width:184px;height:24px"></div>
<div class="t" style="left:268px;top:223.9px;font-size:12.3px;line-height:12px;color:#6a6d75;white-space:nowrap"><span class="sx" style="transform:scaleX(0.835)">MAP_2_5_00_AP_AP1.1.rvt</span></div>
<svg class="a" style="left:426px;top:225px" width="11" height="7" viewBox="-1 -1 11 7"><path d="M0 0 L4.6 4.4 L9.2 0" fill="none" stroke="#9a9eab" stroke-width="1.1"/></svg>
<div class="t" style="left:449.5px;top:219.1px;width:108px;height:18px;overflow:hidden;font-size:12.3px;line-height:12px;color:#383838;white-space:nowrap"><span class="sx" style="transform:scaleX(0.87)">318789470</span></div>
<div class="t" style="left:563.5px;top:219.1px;width:108px;height:18px;overflow:hidden;font-size:12.3px;line-height:12px;color:#383838;white-space:nowrap"><span class="sx" style="transform:scaleX(0.87)">b3. А1-И2</span></div>
<div class="t" style="left:677.3px;top:219.1px;width:108px;height:18px;overflow:hidden;font-size:12.3px;line-height:12px;color:#383838;white-space:nowrap"><span class="sx" style="transform:scaleX(0.87)">2650-2658 : АР_+1.20</span></div>
<div class="t" style="left:791.8px;top:219.1px;width:103px;height:18px;overflow:hidden;font-size:12.3px;line-height:12px;color:#383838;white-space:nowrap"><span class="sx" style="transform:scaleX(0.87)">АР_+1.200_2этаж_С2</span></div>
<div class="a" style="left:128px;top:242px;width:1px;height:26px;background:#111"></div>
<div class="a" style="left:258px;top:242px;width:1px;height:26px;background:#111"></div>
<div class="a" style="left:445px;top:242px;width:1px;height:26px;background:#111"></div>
<div class="a" style="left:560px;top:242px;width:1px;height:26px;background:#111"></div>
<div class="a" style="left:674px;top:242px;width:1px;height:26px;background:#111"></div>
<div class="a" style="left:788px;top:242px;width:1px;height:26px;background:#111"></div>
<div class="a" style="left:1px;top:243px;width:126px;height:24px;background:#90ee90"></div>
<div class="a" style="left:130px;top:243px;width:127px;height:24px;background:#ff4500"></div>
<div class="a ucb" style="left:1.5px;top:247px"></div>
<div class="a ucb" style="left:130.29999999999995px;top:247px"></div>
<div class="a dd" style="left:260px;top:243px;width:184px;height:24px"></div>
<div class="t" style="left:268px;top:249.9px;font-size:12.3px;line-height:12px;color:#6a6d75;white-space:nowrap"><span class="sx" style="transform:scaleX(0.835)">MAP_2_5_00_AP_AP1.1.rvt</span></div>
<svg class="a" style="left:426px;top:251px" width="11" height="7" viewBox="-1 -1 11 7"><path d="M0 0 L4.6 4.4 L9.2 0" fill="none" stroke="#9a9eab" stroke-width="1.1"/></svg>
<div class="t" style="left:449.5px;top:245.1px;width:108px;height:18px;overflow:hidden;font-size:12.3px;line-height:12px;color:#383838;white-space:nowrap"><span class="sx" style="transform:scaleX(0.87)">318789469</span></div>
<div class="t" style="left:563.5px;top:245.1px;width:108px;height:18px;overflow:hidden;font-size:12.3px;line-height:12px;color:#383838;white-space:nowrap"><span class="sx" style="transform:scaleX(0.87)">b3. А1-И2</span></div>
<div class="t" style="left:677.3px;top:245.1px;width:108px;height:18px;overflow:hidden;font-size:12.3px;line-height:12px;color:#383838;white-space:nowrap"><span class="sx" style="transform:scaleX(0.87)">2655-2658 : АР_+1.20</span></div>
<div class="t" style="left:791.8px;top:245.1px;width:103px;height:18px;overflow:hidden;font-size:12.3px;line-height:12px;color:#383838;white-space:nowrap"><span class="sx" style="transform:scaleX(0.87)">АР_+1.200_2этаж_С2</span></div>
<div class="a" style="left:128px;top:269px;width:1px;height:26px;background:#111"></div>
<div class="a" style="left:258px;top:269px;width:1px;height:26px;background:#111"></div>
<div class="a" style="left:445px;top:269px;width:1px;height:26px;background:#111"></div>
<div class="a" style="left:560px;top:269px;width:1px;height:26px;background:#111"></div>
<div class="a" style="left:674px;top:269px;width:1px;height:26px;background:#111"></div>
<div class="a" style="left:788px;top:269px;width:1px;height:26px;background:#111"></div>
<div class="a" style="left:1px;top:270px;width:126px;height:24px;background:#90ee90"></div>
<div class="a" style="left:130px;top:270px;width:127px;height:24px;background:#ff4500"></div>
<div class="a ucb" style="left:1.5px;top:274px"></div>
<div class="a ucb" style="left:130.29999999999995px;top:274px"></div>
<div class="a dd" style="left:260px;top:270px;width:184px;height:24px"></div>
<div class="t" style="left:268px;top:276.9px;font-size:12.3px;line-height:12px;color:#6a6d75;white-space:nowrap"><span class="sx" style="transform:scaleX(0.835)">MAP_2_5_00_AP_AP1.1.rvt</span></div>
<svg class="a" style="left:426px;top:278px" width="11" height="7" viewBox="-1 -1 11 7"><path d="M0 0 L4.6 4.4 L9.2 0" fill="none" stroke="#9a9eab" stroke-width="1.1"/></svg>
<div class="t" style="left:449.5px;top:272.1px;width:108px;height:18px;overflow:hidden;font-size:12.3px;line-height:12px;color:#383838;white-space:nowrap"><span class="sx" style="transform:scaleX(0.87)">318789485</span></div>
<div class="t" style="left:563.5px;top:272.1px;width:108px;height:18px;overflow:hidden;font-size:12.3px;line-height:12px;color:#383838;white-space:nowrap"><span class="sx" style="transform:scaleX(0.87)">b3. А1-И2</span></div>
<div class="t" style="left:677.3px;top:272.1px;width:108px;height:18px;overflow:hidden;font-size:12.3px;line-height:12px;color:#383838;white-space:nowrap"><span class="sx" style="transform:scaleX(0.87)">2655-2658 : АР_+1.20</span></div>
<div class="t" style="left:791.8px;top:272.1px;width:103px;height:18px;overflow:hidden;font-size:12.3px;line-height:12px;color:#383838;white-space:nowrap"><span class="sx" style="transform:scaleX(0.87)">АР_+1.200_2этаж_С2</span></div>
<div class="a" style="left:128px;top:296px;width:1px;height:26px;background:#111"></div>
<div class="a" style="left:258px;top:296px;width:1px;height:26px;background:#111"></div>
<div class="a" style="left:445px;top:296px;width:1px;height:26px;background:#111"></div>
<div class="a" style="left:560px;top:296px;width:1px;height:26px;background:#111"></div>
<div class="a" style="left:674px;top:296px;width:1px;height:26px;background:#111"></div>
<div class="a" style="left:788px;top:296px;width:1px;height:26px;background:#111"></div>
<div class="a" style="left:1px;top:297px;width:126px;height:24px;background:#90ee90"></div>
<div class="a" style="left:130px;top:297px;width:127px;height:24px;background:#ff4500"></div>
<div class="a ucb" style="left:1.5px;top:301px"></div>
<div class="a ucb" style="left:130.29999999999995px;top:301px"></div>
<div class="a dd" style="left:260px;top:297px;width:184px;height:24px"></div>
<div class="t" style="left:268px;top:303.9px;font-size:12.3px;line-height:12px;color:#6a6d75;white-space:nowrap"><span class="sx" style="transform:scaleX(0.835)">MAP_2_5_00_AP_AP1.1.rvt</span></div>
<svg class="a" style="left:426px;top:305px" width="11" height="7" viewBox="-1 -1 11 7"><path d="M0 0 L4.6 4.4 L9.2 0" fill="none" stroke="#9a9eab" stroke-width="1.1"/></svg>
<div class="t" style="left:449.5px;top:299.1px;width:108px;height:18px;overflow:hidden;font-size:12.3px;line-height:12px;color:#383838;white-space:nowrap"><span class="sx" style="transform:scaleX(0.87)">318789471</span></div>
<div class="t" style="left:563.5px;top:299.1px;width:108px;height:18px;overflow:hidden;font-size:12.3px;line-height:12px;color:#383838;white-space:nowrap"><span class="sx" style="transform:scaleX(0.87)">b3. А1-И2</span></div>
<div class="t" style="left:677.3px;top:299.1px;width:108px;height:18px;overflow:hidden;font-size:12.3px;line-height:12px;color:#383838;white-space:nowrap"><span class="sx" style="transform:scaleX(0.87)">2650-2658 : АР_+1.20</span></div>
<div class="t" style="left:791.8px;top:299.1px;width:103px;height:18px;overflow:hidden;font-size:12.3px;line-height:12px;color:#383838;white-space:nowrap"><span class="sx" style="transform:scaleX(0.87)">АР_+1.200_2этаж_С2</span></div>
<div class="a" style="left:128px;top:323px;width:1px;height:26px;background:#111"></div>
<div class="a" style="left:258px;top:323px;width:1px;height:26px;background:#111"></div>
<div class="a" style="left:445px;top:323px;width:1px;height:26px;background:#111"></div>
<div class="a" style="left:560px;top:323px;width:1px;height:26px;background:#111"></div>
<div class="a" style="left:674px;top:323px;width:1px;height:26px;background:#111"></div>
<div class="a" style="left:788px;top:323px;width:1px;height:26px;background:#111"></div>
<div class="a" style="left:1px;top:324px;width:126px;height:24px;background:#90ee90"></div>
<div class="a" style="left:130px;top:324px;width:127px;height:24px;background:#ff4500"></div>
<div class="a ucb" style="left:1.5px;top:328px"></div>
<div class="a ucb" style="left:130.29999999999995px;top:328px"></div>
<div class="a dd" style="left:260px;top:324px;width:184px;height:24px"></div>
<div class="t" style="left:268px;top:330.9px;font-size:12.3px;line-height:12px;color:#6a6d75;white-space:nowrap"><span class="sx" style="transform:scaleX(0.835)">MAP_2_5_00_AP_AP1.1.rvt</span></div>
<svg class="a" style="left:426px;top:332px" width="11" height="7" viewBox="-1 -1 11 7"><path d="M0 0 L4.6 4.4 L9.2 0" fill="none" stroke="#9a9eab" stroke-width="1.1"/></svg>
<div class="t" style="left:449.5px;top:326.1px;width:108px;height:18px;overflow:hidden;font-size:12.3px;line-height:12px;color:#383838;white-space:nowrap"><span class="sx" style="transform:scaleX(0.87)">318789487</span></div>
<div class="t" style="left:563.5px;top:326.1px;width:108px;height:18px;overflow:hidden;font-size:12.3px;line-height:12px;color:#383838;white-space:nowrap"><span class="sx" style="transform:scaleX(0.87)">b3. А1-И2</span></div>
<div class="t" style="left:677.3px;top:326.1px;width:108px;height:18px;overflow:hidden;font-size:12.3px;line-height:12px;color:#383838;white-space:nowrap"><span class="sx" style="transform:scaleX(0.87)">2650-2658 : АР_+1.20</span></div>
<div class="t" style="left:791.8px;top:326.1px;width:103px;height:18px;overflow:hidden;font-size:12.3px;line-height:12px;color:#383838;white-space:nowrap"><span class="sx" style="transform:scaleX(0.87)">АР_+1.200_2этаж_С2</span></div>
<div class="a" style="left:128px;top:350px;width:1px;height:26px;background:#111"></div>
<div class="a" style="left:258px;top:350px;width:1px;height:26px;background:#111"></div>
<div class="a" style="left:445px;top:350px;width:1px;height:26px;background:#111"></div>
<div class="a" style="left:560px;top:350px;width:1px;height:26px;background:#111"></div>
<div class="a" style="left:674px;top:350px;width:1px;height:26px;background:#111"></div>
<div class="a" style="left:788px;top:350px;width:1px;height:26px;background:#111"></div>
<div class="a" style="left:1px;top:351px;width:126px;height:24px;background:#90ee90"></div>
<div class="a" style="left:130px;top:351px;width:127px;height:24px;background:#ff4500"></div>
<div class="a ucb" style="left:1.5px;top:355px"></div>
<div class="a ucb" style="left:130.29999999999995px;top:355px"></div>
<div class="a dd" style="left:260px;top:351px;width:184px;height:24px"></div>
<div class="t" style="left:268px;top:357.9px;font-size:12.3px;line-height:12px;color:#6a6d75;white-space:nowrap"><span class="sx" style="transform:scaleX(0.835)">MAP_2_5_1-3_AP_AP2-3.rvt</span></div>
<svg class="a" style="left:426px;top:359px" width="11" height="7" viewBox="-1 -1 11 7"><path d="M0 0 L4.6 4.4 L9.2 0" fill="none" stroke="#9a9eab" stroke-width="1.1"/></svg>
<div class="t" style="left:449.5px;top:353.1px;width:108px;height:18px;overflow:hidden;font-size:12.3px;line-height:12px;color:#383838;white-space:nowrap"><span class="sx" style="transform:scaleX(0.87)">318789484</span></div>
<div class="t" style="left:563.5px;top:353.1px;width:108px;height:18px;overflow:hidden;font-size:12.3px;line-height:12px;color:#383838;white-space:nowrap"><span class="sx" style="transform:scaleX(0.87)">b3. А1-И2</span></div>
<div class="t" style="left:677.3px;top:353.1px;width:108px;height:18px;overflow:hidden;font-size:12.3px;line-height:12px;color:#383838;white-space:nowrap"><span class="sx" style="transform:scaleX(0.87)">2195-2199 : КР_+52.3</span></div>
<div class="t" style="left:791.8px;top:353.1px;width:103px;height:18px;overflow:hidden;font-size:12.3px;line-height:12px;color:#383838;white-space:nowrap"><span class="sx" style="transform:scaleX(0.87)">КР_+52.350_Кровля_</span></div>
<div class="a" style="left:128px;top:377px;width:1px;height:26px;background:#111"></div>
<div class="a" style="left:258px;top:377px;width:1px;height:26px;background:#111"></div>
<div class="a" style="left:445px;top:377px;width:1px;height:26px;background:#111"></div>
<div class="a" style="left:560px;top:377px;width:1px;height:26px;background:#111"></div>
<div class="a" style="left:674px;top:377px;width:1px;height:26px;background:#111"></div>
<div class="a" style="left:788px;top:377px;width:1px;height:26px;background:#111"></div>
<div class="a" style="left:1px;top:378px;width:126px;height:24px;background:#90ee90"></div>
<div class="a" style="left:130px;top:378px;width:127px;height:24px;background:#ff4500"></div>
<div class="a ucb" style="left:1.5px;top:382px"></div>
<div class="a ucb" style="left:130.29999999999995px;top:382px"></div>
<div class="a dd" style="left:260px;top:378px;width:184px;height:24px"></div>
<div class="t" style="left:268px;top:384.9px;font-size:12.3px;line-height:12px;color:#6a6d75;white-space:nowrap"><span class="sx" style="transform:scaleX(0.835)">MAP_2_5_1-3_KP_КЖ0.2.rvt</span></div>
<svg class="a" style="left:426px;top:386px" width="11" height="7" viewBox="-1 -1 11 7"><path d="M0 0 L4.6 4.4 L9.2 0" fill="none" stroke="#9a9eab" stroke-width="1.1"/></svg>
<div class="t" style="left:449.5px;top:380.1px;width:108px;height:18px;overflow:hidden;font-size:12.3px;line-height:12px;color:#383838;white-space:nowrap"><span class="sx" style="transform:scaleX(0.87)">318788722</span></div>
<div class="t" style="left:563.5px;top:380.1px;width:108px;height:18px;overflow:hidden;font-size:12.3px;line-height:12px;color:#383838;white-space:nowrap"><span class="sx" style="transform:scaleX(0.87)">а3. К2-И2</span></div>
<div class="t" style="left:677.3px;top:380.1px;width:108px;height:18px;overflow:hidden;font-size:12.3px;line-height:12px;color:#383838;white-space:nowrap"><span class="sx" style="transform:scaleX(0.87)">2650-2658 : АР_-1.00</span></div>
<div class="t" style="left:791.8px;top:380.1px;width:103px;height:18px;overflow:hidden;font-size:12.3px;line-height:12px;color:#383838;white-space:nowrap"><span class="sx" style="transform:scaleX(0.87)">АР_-1.000_1этаж_Пр</span></div>
<div class="a" style="left:128px;top:404px;width:1px;height:26px;background:#111"></div>
<div class="a" style="left:258px;top:404px;width:1px;height:26px;background:#111"></div>
<div class="a" style="left:445px;top:404px;width:1px;height:26px;background:#111"></div>
<div class="a" style="left:560px;top:404px;width:1px;height:26px;background:#111"></div>
<div class="a" style="left:674px;top:404px;width:1px;height:26px;background:#111"></div>
<div class="a" style="left:788px;top:404px;width:1px;height:26px;background:#111"></div>
<div class="a" style="left:1px;top:405px;width:126px;height:24px;background:#90ee90"></div>
<div class="a" style="left:130px;top:405px;width:127px;height:24px;background:#ff4500"></div>
<div class="a ucb" style="left:1.5px;top:409px"></div>
<div class="a ucb" style="left:130.29999999999995px;top:409px"></div>
<div class="a dd" style="left:260px;top:405px;width:184px;height:24px"></div>
<div class="t" style="left:268px;top:411.9px;font-size:12.3px;line-height:12px;color:#6a6d75;white-space:nowrap"><span class="sx" style="transform:scaleX(0.835)">MAP_2_5_1-3_KP_КЖ0.2.rvt</span></div>
<svg class="a" style="left:426px;top:413px" width="11" height="7" viewBox="-1 -1 11 7"><path d="M0 0 L4.6 4.4 L9.2 0" fill="none" stroke="#9a9eab" stroke-width="1.1"/></svg>
<div class="t" style="left:449.5px;top:407.1px;width:108px;height:18px;overflow:hidden;font-size:12.3px;line-height:12px;color:#383838;white-space:nowrap"><span class="sx" style="transform:scaleX(0.87)">318788723</span></div>
<div class="t" style="left:563.5px;top:407.1px;width:108px;height:18px;overflow:hidden;font-size:12.3px;line-height:12px;color:#383838;white-space:nowrap"><span class="sx" style="transform:scaleX(0.87)">а3. К2-И2</span></div>
<div class="t" style="left:677.3px;top:407.1px;width:108px;height:18px;overflow:hidden;font-size:12.3px;line-height:12px;color:#383838;white-space:nowrap"><span class="sx" style="transform:scaleX(0.87)">2658-2661 : АР_-0.70</span></div>
<div class="t" style="left:791.8px;top:407.1px;width:103px;height:18px;overflow:hidden;font-size:12.3px;line-height:12px;color:#383838;white-space:nowrap"><span class="sx" style="transform:scaleX(0.87)">АР_-0.700_1этаж_Пр</span></div>
<div class="a" style="left:128px;top:431px;width:1px;height:26px;background:#111"></div>
<div class="a" style="left:258px;top:431px;width:1px;height:26px;background:#111"></div>
<div class="a" style="left:445px;top:431px;width:1px;height:26px;background:#111"></div>
<div class="a" style="left:560px;top:431px;width:1px;height:26px;background:#111"></div>
<div class="a" style="left:674px;top:431px;width:1px;height:26px;background:#111"></div>
<div class="a" style="left:788px;top:431px;width:1px;height:26px;background:#111"></div>
<div class="a" style="left:1px;top:432px;width:126px;height:24px;background:#90ee90"></div>
<div class="a" style="left:130px;top:432px;width:127px;height:24px;background:#ff4500"></div>
<div class="a ucb" style="left:1.5px;top:436px"></div>
<div class="a ucb" style="left:130.29999999999995px;top:436px"></div>
<div class="a dd" style="left:260px;top:432px;width:184px;height:24px"></div>
<div class="t" style="left:268px;top:438.9px;font-size:12.3px;line-height:12px;color:#6a6d75;white-space:nowrap"><span class="sx" style="transform:scaleX(0.835)">MAP_2_5_1-3_KP_KM2.rvt</span></div>
<svg class="a" style="left:426px;top:440px" width="11" height="7" viewBox="-1 -1 11 7"><path d="M0 0 L4.6 4.4 L9.2 0" fill="none" stroke="#9a9eab" stroke-width="1.1"/></svg>
<div class="t" style="left:449.5px;top:434.1px;width:108px;height:18px;overflow:hidden;font-size:12.3px;line-height:12px;color:#383838;white-space:nowrap"><span class="sx" style="transform:scaleX(0.87)">318790929</span></div>
<div class="t" style="left:563.5px;top:434.1px;width:108px;height:18px;overflow:hidden;font-size:12.3px;line-height:12px;color:#383838;white-space:nowrap"><span class="sx" style="transform:scaleX(0.87)">с3. К4-И2</span></div>
<div class="t" style="left:677.3px;top:434.1px;width:108px;height:18px;overflow:hidden;font-size:12.3px;line-height:12px;color:#383838;white-space:nowrap"><span class="sx" style="transform:scaleX(0.87)">2640-2859 : КР_+52.3</span></div>
<div class="t" style="left:791.8px;top:434.1px;width:103px;height:18px;overflow:hidden;font-size:12.3px;line-height:12px;color:#383838;white-space:nowrap"><span class="sx" style="transform:scaleX(0.87)">КР_+52.350_Кровля_</span></div>
<div class="a" style="left:128px;top:458px;width:1px;height:26px;background:#111"></div>
<div class="a" style="left:258px;top:458px;width:1px;height:26px;background:#111"></div>
<div class="a" style="left:445px;top:458px;width:1px;height:26px;background:#111"></div>
<div class="a" style="left:560px;top:458px;width:1px;height:26px;background:#111"></div>
<div class="a" style="left:674px;top:458px;width:1px;height:26px;background:#111"></div>
<div class="a" style="left:788px;top:458px;width:1px;height:26px;background:#111"></div>
<div class="a" style="left:1px;top:459px;width:126px;height:24px;background:#90ee90"></div>
<div class="a" style="left:130px;top:459px;width:127px;height:24px;background:#ff4500"></div>
<div class="a ucb" style="left:1.5px;top:463px"></div>
<div class="a ucb" style="left:130.29999999999995px;top:463px"></div>
<div class="a dd" style="left:260px;top:459px;width:184px;height:24px"></div>
<div class="t" style="left:268px;top:465.9px;font-size:12.3px;line-height:12px;color:#6a6d75;white-space:nowrap"><span class="sx" style="transform:scaleX(0.835)">MAP_2_5_1-3_KP_KM2.rvt</span></div>
<svg class="a" style="left:426px;top:467px" width="11" height="7" viewBox="-1 -1 11 7"><path d="M0 0 L4.6 4.4 L9.2 0" fill="none" stroke="#9a9eab" stroke-width="1.1"/></svg>
<div class="t" style="left:449.5px;top:461.1px;width:108px;height:18px;overflow:hidden;font-size:12.3px;line-height:12px;color:#383838;white-space:nowrap"><span class="sx" style="transform:scaleX(0.87)">318790930</span></div>
<div class="t" style="left:563.5px;top:461.1px;width:108px;height:18px;overflow:hidden;font-size:12.3px;line-height:12px;color:#383838;white-space:nowrap"><span class="sx" style="transform:scaleX(0.87)">с3. К4-И2</span></div>
<div class="t" style="left:677.3px;top:461.1px;width:108px;height:18px;overflow:hidden;font-size:12.3px;line-height:12px;color:#383838;white-space:nowrap"><span class="sx" style="transform:scaleX(0.87)">2536-2859 : КР_+52.3</span></div>
<div class="t" style="left:791.8px;top:461.1px;width:103px;height:18px;overflow:hidden;font-size:12.3px;line-height:12px;color:#383838;white-space:nowrap"><span class="sx" style="transform:scaleX(0.87)">КР_+52.350_Кровля_</span></div>
<div class="a" style="left:128px;top:485px;width:1px;height:26px;background:#111"></div>
<div class="a" style="left:258px;top:485px;width:1px;height:26px;background:#111"></div>
<div class="a" style="left:445px;top:485px;width:1px;height:26px;background:#111"></div>
<div class="a" style="left:560px;top:485px;width:1px;height:26px;background:#111"></div>
<div class="a" style="left:674px;top:485px;width:1px;height:26px;background:#111"></div>
<div class="a" style="left:788px;top:485px;width:1px;height:26px;background:#111"></div>
<div class="a" style="left:1px;top:486px;width:126px;height:24px;background:#90ee90"></div>
<div class="a" style="left:130px;top:486px;width:127px;height:24px;background:#ff4500"></div>
<div class="a ucb" style="left:1.5px;top:490px"></div>
<div class="a ucb" style="left:130.29999999999995px;top:490px"></div>
<div class="a dd" style="left:260px;top:486px;width:184px;height:24px"></div>
<div class="t" style="left:268px;top:492.9px;font-size:12.3px;line-height:12px;color:#6a6d75;white-space:nowrap"><span class="sx" style="transform:scaleX(0.835)">MAP_2_5_1-3_KP_KM2.rvt</span></div>
<svg class="a" style="left:426px;top:494px" width="11" height="7" viewBox="-1 -1 11 7"><path d="M0 0 L4.6 4.4 L9.2 0" fill="none" stroke="#9a9eab" stroke-width="1.1"/></svg>
<div class="t" style="left:449.5px;top:488.1px;width:108px;height:18px;overflow:hidden;font-size:12.3px;line-height:12px;color:#383838;white-space:nowrap"><span class="sx" style="transform:scaleX(0.87)">318790927</span></div>
<div class="t" style="left:563.5px;top:488.1px;width:108px;height:18px;overflow:hidden;font-size:12.3px;line-height:12px;color:#383838;white-space:nowrap"><span class="sx" style="transform:scaleX(0.87)">с3. К4-И2</span></div>
<div class="t" style="left:677.3px;top:488.1px;width:108px;height:18px;overflow:hidden;font-size:12.3px;line-height:12px;color:#383838;white-space:nowrap"><span class="sx" style="transform:scaleX(0.87)">2859-2865 : КР_+52.3</span></div>
<div class="t" style="left:791.8px;top:488.1px;width:103px;height:18px;overflow:hidden;font-size:12.3px;line-height:12px;color:#383838;white-space:nowrap"><span class="sx" style="transform:scaleX(0.87)">КР_+52.350_Кровля_</span></div>
<div class="a" style="left:128px;top:512px;width:1px;height:26px;background:#111"></div>
<div class="a" style="left:258px;top:512px;width:1px;height:26px;background:#111"></div>
<div class="a" style="left:445px;top:512px;width:1px;height:26px;background:#111"></div>
<div class="a" style="left:560px;top:512px;width:1px;height:26px;background:#111"></div>
<div class="a" style="left:674px;top:512px;width:1px;height:26px;background:#111"></div>
<div class="a" style="left:788px;top:512px;width:1px;height:26px;background:#111"></div>
<div class="a" style="left:1px;top:513px;width:126px;height:24px;background:#90ee90"></div>
<div class="a" style="left:130px;top:513px;width:127px;height:24px;background:#ff4500"></div>
<div class="a ucb" style="left:1.5px;top:517px"></div>
<div class="a ucb" style="left:130.29999999999995px;top:517px"></div>
<div class="a dd" style="left:260px;top:513px;width:184px;height:24px"></div>
<div class="t" style="left:268px;top:519.9px;font-size:12.3px;line-height:12px;color:#6a6d75;white-space:nowrap"><span class="sx" style="transform:scaleX(0.835)">MAP_2_5_1-3_KP_KM2.rvt</span></div>
<svg class="a" style="left:426px;top:521px" width="11" height="7" viewBox="-1 -1 11 7"><path d="M0 0 L4.6 4.4 L9.2 0" fill="none" stroke="#9a9eab" stroke-width="1.1"/></svg>
<div class="t" style="left:449.5px;top:515.1px;width:108px;height:18px;overflow:hidden;font-size:12.3px;line-height:12px;color:#383838;white-space:nowrap"><span class="sx" style="transform:scaleX(0.87)">318790928</span></div>
<div class="t" style="left:563.5px;top:515.1px;width:108px;height:18px;overflow:hidden;font-size:12.3px;line-height:12px;color:#383838;white-space:nowrap"><span class="sx" style="transform:scaleX(0.87)">с3. К4-И2</span></div>
<div class="t" style="left:677.3px;top:515.1px;width:108px;height:18px;overflow:hidden;font-size:12.3px;line-height:12px;color:#383838;white-space:nowrap"><span class="sx" style="transform:scaleX(0.87)">2859-2865 : КР_+52.3</span></div>
<div class="t" style="left:791.8px;top:515.1px;width:103px;height:18px;overflow:hidden;font-size:12.3px;line-height:12px;color:#383838;white-space:nowrap"><span class="sx" style="transform:scaleX(0.87)">КР_+52.350_Кровля_</span></div>
<div class="a" style="left:128px;top:539px;width:1px;height:26px;background:#111"></div>
<div class="a" style="left:258px;top:539px;width:1px;height:26px;background:#111"></div>
<div class="a" style="left:445px;top:539px;width:1px;height:26px;background:#111"></div>
<div class="a" style="left:560px;top:539px;width:1px;height:26px;background:#111"></div>
<div class="a" style="left:674px;top:539px;width:1px;height:26px;background:#111"></div>
<div class="a" style="left:788px;top:539px;width:1px;height:26px;background:#111"></div>
<div class="a" style="left:1px;top:540px;width:126px;height:24px;background:#90ee90"></div>
<div class="a" style="left:130px;top:540px;width:127px;height:24px;background:#ff4500"></div>
<div class="a ucb" style="left:1.5px;top:544px"></div>
<div class="a ucb" style="left:130.29999999999995px;top:544px"></div>
<div class="a dd" style="left:260px;top:540px;width:184px;height:24px"></div>
<div class="t" style="left:268px;top:546.9px;font-size:12.3px;line-height:12px;color:#6a6d75;white-space:nowrap"><span class="sx" style="transform:scaleX(0.835)">MAP_2_5_1-3_KP_KM2.rvt</span></div>
<svg class="a" style="left:426px;top:548px" width="11" height="7" viewBox="-1 -1 11 7"><path d="M0 0 L4.6 4.4 L9.2 0" fill="none" stroke="#9a9eab" stroke-width="1.1"/></svg>
<div class="t" style="left:449.5px;top:542.1px;width:108px;height:18px;overflow:hidden;font-size:12.3px;line-height:12px;color:#383838;white-space:nowrap"><span class="sx" style="transform:scaleX(0.87)">318790931</span></div>
<div class="t" style="left:563.5px;top:542.1px;width:108px;height:18px;overflow:hidden;font-size:12.3px;line-height:12px;color:#383838;white-space:nowrap"><span class="sx" style="transform:scaleX(0.87)">с3. К4-И2</span></div>
<div class="t" style="left:677.3px;top:542.1px;width:108px;height:18px;overflow:hidden;font-size:12.3px;line-height:12px;color:#383838;white-space:nowrap"><span class="sx" style="transform:scaleX(0.87)">2194-2198 : КР_+52.3</span></div>
<div class="t" style="left:791.8px;top:542.1px;width:103px;height:18px;overflow:hidden;font-size:12.3px;line-height:12px;color:#383838;white-space:nowrap"><span class="sx" style="transform:scaleX(0.87)">КР_+52.350_Кровля_</span></div>
<div class="a" style="left:128px;top:566px;width:1px;height:26px;background:#111"></div>
<div class="a" style="left:258px;top:566px;width:1px;height:26px;background:#111"></div>
<div class="a" style="left:445px;top:566px;width:1px;height:26px;background:#111"></div>
<div class="a" style="left:560px;top:566px;width:1px;height:26px;background:#111"></div>
<div class="a" style="left:674px;top:566px;width:1px;height:26px;background:#111"></div>
<div class="a" style="left:788px;top:566px;width:1px;height:26px;background:#111"></div>
<div class="a" style="left:1px;top:567px;width:126px;height:24px;background:#90ee90"></div>
<div class="a" style="left:130px;top:567px;width:127px;height:24px;background:#ff4500"></div>
<div class="a ucb" style="left:1.5px;top:571px"></div>
<div class="a ucb" style="left:130.29999999999995px;top:571px"></div>
<div class="a dd" style="left:260px;top:567px;width:184px;height:24px"></div>
<div class="t" style="left:268px;top:573.9px;font-size:12.3px;line-height:12px;color:#6a6d75;white-space:nowrap"><span class="sx" style="transform:scaleX(0.835)">MAP_2_5_1-3_KP_KM2.rvt</span></div>
<svg class="a" style="left:426px;top:575px" width="11" height="7" viewBox="-1 -1 11 7"><path d="M0 0 L4.6 4.4 L9.2 0" fill="none" stroke="#9a9eab" stroke-width="1.1"/></svg>
<div class="t" style="left:449.5px;top:569.1px;width:108px;height:18px;overflow:hidden;font-size:12.3px;line-height:12px;color:#383838;white-space:nowrap"><span class="sx" style="transform:scaleX(0.87)">318790934</span></div>
<div class="t" style="left:563.5px;top:569.1px;width:108px;height:18px;overflow:hidden;font-size:12.3px;line-height:12px;color:#383838;white-space:nowrap"><span class="sx" style="transform:scaleX(0.87)">с3. К4-И2</span></div>
<div class="t" style="left:677.3px;top:569.1px;width:108px;height:18px;overflow:hidden;font-size:12.3px;line-height:12px;color:#383838;white-space:nowrap"><span class="sx" style="transform:scaleX(0.87)">2641-2860 : КР_+52.3</span></div>
<div class="t" style="left:791.8px;top:569.1px;width:103px;height:18px;overflow:hidden;font-size:12.3px;line-height:12px;color:#383838;white-space:nowrap"><span class="sx" style="transform:scaleX(0.87)">КР_+52.350_Кровля_</span></div>
<div class="a" style="left:128px;top:593px;width:1px;height:26px;background:#111"></div>
<div class="a" style="left:258px;top:593px;width:1px;height:26px;background:#111"></div>
<div class="a" style="left:445px;top:593px;width:1px;height:26px;background:#111"></div>
<div class="a" style="left:560px;top:593px;width:1px;height:26px;background:#111"></div>
<div class="a" style="left:674px;top:593px;width:1px;height:26px;background:#111"></div>
<div class="a" style="left:788px;top:593px;width:1px;height:26px;background:#111"></div>
<div class="a" style="left:1px;top:594px;width:126px;height:24px;background:#90ee90"></div>
<div class="a" style="left:130px;top:594px;width:127px;height:24px;background:#ff4500"></div>
<div class="a ucb" style="left:1.5px;top:598px"></div>
<div class="a ucb" style="left:130.29999999999995px;top:598px"></div>
<div class="a dd" style="left:260px;top:594px;width:184px;height:24px"></div>
<div class="t" style="left:268px;top:600.9px;font-size:12.3px;line-height:12px;color:#6a6d75;white-space:nowrap"><span class="sx" style="transform:scaleX(0.835)">MAP_2_5_1-3_KP_KM2.rvt</span></div>
<svg class="a" style="left:426px;top:602px" width="11" height="7" viewBox="-1 -1 11 7"><path d="M0 0 L4.6 4.4 L9.2 0" fill="none" stroke="#9a9eab" stroke-width="1.1"/></svg>
<div class="t" style="left:449.5px;top:596.1px;width:108px;height:18px;overflow:hidden;font-size:12.3px;line-height:12px;color:#383838;white-space:nowrap"><span class="sx" style="transform:scaleX(0.87)">318790935</span></div>
<div class="t" style="left:563.5px;top:596.1px;width:108px;height:18px;overflow:hidden;font-size:12.3px;line-height:12px;color:#383838;white-space:nowrap"><span class="sx" style="transform:scaleX(0.87)">с3. К4-И2</span></div>
<div class="t" style="left:677.3px;top:596.1px;width:108px;height:18px;overflow:hidden;font-size:12.3px;line-height:12px;color:#383838;white-space:nowrap"><span class="sx" style="transform:scaleX(0.87)">2535-2860 : КР_+52.3</span></div>
<div class="t" style="left:791.8px;top:596.1px;width:103px;height:18px;overflow:hidden;font-size:12.3px;line-height:12px;color:#383838;white-space:nowrap"><span class="sx" style="transform:scaleX(0.87)">КР_+52.350_Кровля_</span></div>
<div class="a" style="left:128px;top:620px;width:1px;height:26px;background:#111"></div>
<div class="a" style="left:258px;top:620px;width:1px;height:26px;background:#111"></div>
<div class="a" style="left:445px;top:620px;width:1px;height:26px;background:#111"></div>
<div class="a" style="left:560px;top:620px;width:1px;height:26px;background:#111"></div>
<div class="a" style="left:674px;top:620px;width:1px;height:26px;background:#111"></div>
<div class="a" style="left:788px;top:620px;width:1px;height:26px;background:#111"></div>
<div class="a" style="left:1px;top:621px;width:126px;height:24px;background:#90ee90"></div>
<div class="a" style="left:130px;top:621px;width:127px;height:24px;background:#ff4500"></div>
<div class="a ucb" style="left:1.5px;top:625px"></div>
<div class="a ucb" style="left:130.29999999999995px;top:625px"></div>
<div class="a dd" style="left:260px;top:621px;width:184px;height:24px"></div>
<div class="t" style="left:268px;top:627.9px;font-size:12.3px;line-height:12px;color:#6a6d75;white-space:nowrap"><span class="sx" style="transform:scaleX(0.835)">MAP_2_5_1-3_KP_KM2.rvt</span></div>
<svg class="a" style="left:426px;top:629px" width="11" height="7" viewBox="-1 -1 11 7"><path d="M0 0 L4.6 4.4 L9.2 0" fill="none" stroke="#9a9eab" stroke-width="1.1"/></svg>
<div class="t" style="left:449.5px;top:623.1px;width:108px;height:18px;overflow:hidden;font-size:12.3px;line-height:12px;color:#383838;white-space:nowrap"><span class="sx" style="transform:scaleX(0.87)">318791099</span></div>
<div class="t" style="left:563.5px;top:623.1px;width:108px;height:18px;overflow:hidden;font-size:12.3px;line-height:12px;color:#383838;white-space:nowrap"><span class="sx" style="transform:scaleX(0.87)">с3. К4-И2</span></div>
<div class="t" style="left:677.3px;top:623.1px;width:108px;height:18px;overflow:hidden;font-size:12.3px;line-height:12px;color:#383838;white-space:nowrap"><span class="sx" style="transform:scaleX(0.87)">2535-2860 : КР_+52.3</span></div>
<div class="t" style="left:791.8px;top:623.1px;width:103px;height:18px;overflow:hidden;font-size:12.3px;line-height:12px;color:#383838;white-space:nowrap"><span class="sx" style="transform:scaleX(0.87)">КР_+52.350_Кровля_</span></div>
<div class="a" style="left:128px;top:647px;width:1px;height:26px;background:#111"></div>
<div class="a" style="left:258px;top:647px;width:1px;height:26px;background:#111"></div>
<div class="a" style="left:445px;top:647px;width:1px;height:26px;background:#111"></div>
<div class="a" style="left:560px;top:647px;width:1px;height:26px;background:#111"></div>
<div class="a" style="left:674px;top:647px;width:1px;height:26px;background:#111"></div>
<div class="a" style="left:788px;top:647px;width:1px;height:26px;background:#111"></div>
<div class="a" style="left:1px;top:648px;width:126px;height:24px;background:#90ee90"></div>
<div class="a" style="left:130px;top:648px;width:127px;height:24px;background:#ff4500"></div>
<div class="a ucb" style="left:1.5px;top:652px"></div>
<div class="a ucb" style="left:130.29999999999995px;top:652px"></div>
<div class="a dd" style="left:260px;top:648px;width:184px;height:24px"></div>
<div class="t" style="left:268px;top:654.9px;font-size:12.3px;line-height:12px;color:#6a6d75;white-space:nowrap"><span class="sx" style="transform:scaleX(0.835)">MAP_2_5_1-3_KP_KM2.rvt</span></div>
<svg class="a" style="left:426px;top:656px" width="11" height="7" viewBox="-1 -1 11 7"><path d="M0 0 L4.6 4.4 L9.2 0" fill="none" stroke="#9a9eab" stroke-width="1.1"/></svg>
<div class="t" style="left:449.5px;top:650.1px;width:108px;height:18px;overflow:hidden;font-size:12.3px;line-height:12px;color:#383838;white-space:nowrap"><span class="sx" style="transform:scaleX(0.87)">318791102</span></div>
<div class="t" style="left:563.5px;top:650.1px;width:108px;height:18px;overflow:hidden;font-size:12.3px;line-height:12px;color:#383838;white-space:nowrap"><span class="sx" style="transform:scaleX(0.87)">с3. К4-И2</span></div>
<div class="t" style="left:677.3px;top:650.1px;width:108px;height:18px;overflow:hidden;font-size:12.3px;line-height:12px;color:#383838;white-space:nowrap"><span class="sx" style="transform:scaleX(0.87)">2535-2860 : КР_+52.3</span></div>
<div class="t" style="left:791.8px;top:650.1px;width:103px;height:18px;overflow:hidden;font-size:12.3px;line-height:12px;color:#383838;white-space:nowrap"><span class="sx" style="transform:scaleX(0.87)">КР_+52.350_Кровля_</span></div>
<div class="a" style="left:128px;top:674px;width:1px;height:26px;background:#111"></div>
<div class="a" style="left:258px;top:674px;width:1px;height:26px;background:#111"></div>
<div class="a" style="left:445px;top:674px;width:1px;height:26px;background:#111"></div>
<div class="a" style="left:560px;top:674px;width:1px;height:26px;background:#111"></div>
<div class="a" style="left:674px;top:674px;width:1px;height:26px;background:#111"></div>
<div class="a" style="left:788px;top:674px;width:1px;height:26px;background:#111"></div>
<div class="a" style="left:1px;top:675px;width:126px;height:24px;background:#90ee90"></div>
<div class="a" style="left:130px;top:675px;width:127px;height:24px;background:#ff4500"></div>
<div class="a ucb" style="left:1.5px;top:679px"></div>
<div class="a ucb" style="left:130.29999999999995px;top:679px"></div>
<div class="a dd" style="left:260px;top:675px;width:184px;height:24px"></div>
<div class="t" style="left:268px;top:681.9px;font-size:12.3px;line-height:12px;color:#6a6d75;white-space:nowrap"><span class="sx" style="transform:scaleX(0.835)">MAP_2_5_1-3_KP_KM2.rvt</span></div>
<svg class="a" style="left:426px;top:683px" width="11" height="7" viewBox="-1 -1 11 7"><path d="M0 0 L4.6 4.4 L9.2 0" fill="none" stroke="#9a9eab" stroke-width="1.1"/></svg>
<div class="t" style="left:449.5px;top:677.1px;width:108px;height:18px;overflow:hidden;font-size:12.3px;line-height:12px;color:#383838;white-space:nowrap"><span class="sx" style="transform:scaleX(0.87)">318791101</span></div>
<div class="t" style="left:563.5px;top:677.1px;width:108px;height:18px;overflow:hidden;font-size:12.3px;line-height:12px;color:#383838;white-space:nowrap"><span class="sx" style="transform:scaleX(0.87)">с3. К4-И2</span></div>
<div class="t" style="left:677.3px;top:677.1px;width:108px;height:18px;overflow:hidden;font-size:12.3px;line-height:12px;color:#383838;white-space:nowrap"><span class="sx" style="transform:scaleX(0.87)">2859-2865 : КР_+52.3</span></div>
<div class="t" style="left:791.8px;top:677.1px;width:103px;height:18px;overflow:hidden;font-size:12.3px;line-height:12px;color:#383838;white-space:nowrap"><span class="sx" style="transform:scaleX(0.87)">КР_+52.350_Кровля_</span></div>
<div class="a" style="left:128px;top:700px;width:1px;height:26px;background:#111"></div>
<div class="a" style="left:258px;top:700px;width:1px;height:26px;background:#111"></div>
<div class="a" style="left:445px;top:700px;width:1px;height:26px;background:#111"></div>
<div class="a" style="left:560px;top:700px;width:1px;height:26px;background:#111"></div>
<div class="a" style="left:674px;top:700px;width:1px;height:26px;background:#111"></div>
<div class="a" style="left:788px;top:700px;width:1px;height:26px;background:#111"></div>
<div class="a" style="left:1px;top:701px;width:126px;height:24px;background:#90ee90"></div>
<div class="a" style="left:130px;top:701px;width:127px;height:24px;background:#ff4500"></div>
<div class="a ucb" style="left:1.5px;top:705px"></div>
<div class="a ucb" style="left:130.29999999999995px;top:705px"></div>
<div class="a dd" style="left:260px;top:701px;width:184px;height:24px"></div>
<div class="t" style="left:268px;top:707.9px;font-size:12.3px;line-height:12px;color:#6a6d75;white-space:nowrap"><span class="sx" style="transform:scaleX(0.835)">MAP_2_5_1-3_KP_KM2.rvt</span></div>
<svg class="a" style="left:426px;top:709px" width="11" height="7" viewBox="-1 -1 11 7"><path d="M0 0 L4.6 4.4 L9.2 0" fill="none" stroke="#9a9eab" stroke-width="1.1"/></svg>
<div class="t" style="left:449.5px;top:703.1px;width:108px;height:18px;overflow:hidden;font-size:12.3px;line-height:12px;color:#383838;white-space:nowrap"><span class="sx" style="transform:scaleX(0.87)">318791100</span></div>
<div class="t" style="left:563.5px;top:703.1px;width:108px;height:18px;overflow:hidden;font-size:12.3px;line-height:12px;color:#383838;white-space:nowrap"><span class="sx" style="transform:scaleX(0.87)">с3. К4-И2</span></div>
<div class="t" style="left:677.3px;top:703.1px;width:108px;height:18px;overflow:hidden;font-size:12.3px;line-height:12px;color:#383838;white-space:nowrap"><span class="sx" style="transform:scaleX(0.87)">2859-2865 : КР_+52.3</span></div>
<div class="t" style="left:791.8px;top:703.1px;width:103px;height:18px;overflow:hidden;font-size:12.3px;line-height:12px;color:#383838;white-space:nowrap"><span class="sx" style="transform:scaleX(0.87)">КР_+52.350_Кровля_</span></div>
<div class="a" style="left:128px;top:727px;width:1px;height:26px;background:#111"></div>
<div class="a" style="left:258px;top:727px;width:1px;height:26px;background:#111"></div>
<div class="a" style="left:445px;top:727px;width:1px;height:26px;background:#111"></div>
<div class="a" style="left:560px;top:727px;width:1px;height:26px;background:#111"></div>
<div class="a" style="left:674px;top:727px;width:1px;height:26px;background:#111"></div>
<div class="a" style="left:788px;top:727px;width:1px;height:26px;background:#111"></div>
<div class="a" style="left:1px;top:728px;width:126px;height:24px;background:#90ee90"></div>
<div class="a" style="left:130px;top:728px;width:127px;height:24px;background:#ff4500"></div>
<div class="a ucb" style="left:1.5px;top:732px"></div>
<div class="a ucb" style="left:130.29999999999995px;top:732px"></div>
<div class="a dd" style="left:260px;top:728px;width:184px;height:24px"></div>
<div class="t" style="left:268px;top:734.9px;font-size:12.3px;line-height:12px;color:#6a6d75;white-space:nowrap"><span class="sx" style="transform:scaleX(0.835)">MAP_2_5_1-3_KP_KM2.rvt</span></div>
<svg class="a" style="left:426px;top:736px" width="11" height="7" viewBox="-1 -1 11 7"><path d="M0 0 L4.6 4.4 L9.2 0" fill="none" stroke="#9a9eab" stroke-width="1.1"/></svg>
<div class="t" style="left:449.5px;top:730.1px;width:108px;height:18px;overflow:hidden;font-size:12.3px;line-height:12px;color:#383838;white-space:nowrap"><span class="sx" style="transform:scaleX(0.87)">318790936</span></div>
<div class="t" style="left:563.5px;top:730.1px;width:108px;height:18px;overflow:hidden;font-size:12.3px;line-height:12px;color:#383838;white-space:nowrap"><span class="sx" style="transform:scaleX(0.87)">с3. К4-И2</span></div>
<div class="t" style="left:677.3px;top:730.1px;width:108px;height:18px;overflow:hidden;font-size:12.3px;line-height:12px;color:#383838;white-space:nowrap"><span class="sx" style="transform:scaleX(0.87)">2860-2865 : КР_+52.3</span></div>
<div class="t" style="left:791.8px;top:730.1px;width:103px;height:18px;overflow:hidden;font-size:12.3px;line-height:12px;color:#383838;white-space:nowrap"><span class="sx" style="transform:scaleX(0.87)">КР_+52.350_Кровля_</span></div>
<div class="a" style="left:128px;top:754px;width:1px;height:26px;background:#111"></div>
<div class="a" style="left:258px;top:754px;width:1px;height:26px;background:#111"></div>
<div class="a" style="left:445px;top:754px;width:1px;height:26px;background:#111"></div>
<div class="a" style="left:560px;top:754px;width:1px;height:26px;background:#111"></div>
<div class="a" style="left:674px;top:754px;width:1px;height:26px;background:#111"></div>
<div class="a" style="left:788px;top:754px;width:1px;height:26px;background:#111"></div>
<div class="a" style="left:1px;top:755px;width:126px;height:24px;background:#90ee90"></div>
<div class="a" style="left:130px;top:755px;width:127px;height:24px;background:#ff4500"></div>
<div class="a ucb" style="left:1.5px;top:759px"></div>
<div class="a ucb" style="left:130.29999999999995px;top:759px"></div>
<div class="a dd" style="left:260px;top:755px;width:184px;height:24px"></div>
<div class="t" style="left:268px;top:761.9px;font-size:12.3px;line-height:12px;color:#6a6d75;white-space:nowrap"><span class="sx" style="transform:scaleX(0.835)">MAP_2_5_1-3_KP_KM2.rvt</span></div>
<svg class="a" style="left:426px;top:763px" width="11" height="7" viewBox="-1 -1 11 7"><path d="M0 0 L4.6 4.4 L9.2 0" fill="none" stroke="#9a9eab" stroke-width="1.1"/></svg>
<div class="t" style="left:449.5px;top:757.1px;width:108px;height:18px;overflow:hidden;font-size:12.3px;line-height:12px;color:#383838;white-space:nowrap"><span class="sx" style="transform:scaleX(0.87)">318791098</span></div>
<div class="t" style="left:563.5px;top:757.1px;width:108px;height:18px;overflow:hidden;font-size:12.3px;line-height:12px;color:#383838;white-space:nowrap"><span class="sx" style="transform:scaleX(0.87)">с3. К4-И2</span></div>
<div class="t" style="left:677.3px;top:757.1px;width:108px;height:18px;overflow:hidden;font-size:12.3px;line-height:12px;color:#383838;white-space:nowrap"><span class="sx" style="transform:scaleX(0.87)">2860-2863 : КР_+52.3</span></div>
<div class="t" style="left:791.8px;top:757.1px;width:103px;height:18px;overflow:hidden;font-size:12.3px;line-height:12px;color:#383838;white-space:nowrap"><span class="sx" style="transform:scaleX(0.87)">КР_+52.350_Кровля_</span></div>
<div class="a" style="left:128px;top:781px;width:1px;height:26px;background:#111"></div>
<div class="a" style="left:258px;top:781px;width:1px;height:26px;background:#111"></div>
<div class="a" style="left:445px;top:781px;width:1px;height:26px;background:#111"></div>
<div class="a" style="left:560px;top:781px;width:1px;height:26px;background:#111"></div>
<div class="a" style="left:674px;top:781px;width:1px;height:26px;background:#111"></div>
<div class="a" style="left:788px;top:781px;width:1px;height:26px;background:#111"></div>
<div class="a" style="left:1px;top:782px;width:126px;height:24px;background:#90ee90"></div>
<div class="a" style="left:130px;top:782px;width:127px;height:24px;background:#ff4500"></div>
<div class="a ucb" style="left:1.5px;top:786px"></div>
<div class="a ucb" style="left:130.29999999999995px;top:786px"></div>
<div class="a dd" style="left:260px;top:782px;width:184px;height:24px"></div>
<div class="t" style="left:268px;top:788.9px;font-size:12.3px;line-height:12px;color:#6a6d75;white-space:nowrap"><span class="sx" style="transform:scaleX(0.835)">MAP_2_5_1-3_KP_KM2.rvt</span></div>
<svg class="a" style="left:426px;top:790px" width="11" height="7" viewBox="-1 -1 11 7"><path d="M0 0 L4.6 4.4 L9.2 0" fill="none" stroke="#9a9eab" stroke-width="1.1"/></svg>
<div class="t" style="left:449.5px;top:784.1px;width:108px;height:18px;overflow:hidden;font-size:12.3px;line-height:12px;color:#383838;white-space:nowrap"><span class="sx" style="transform:scaleX(0.87)">318790937</span></div>
<div class="t" style="left:563.5px;top:784.1px;width:108px;height:18px;overflow:hidden;font-size:12.3px;line-height:12px;color:#383838;white-space:nowrap"><span class="sx" style="transform:scaleX(0.87)">с3. К4-И2</span></div>
<div class="t" style="left:677.3px;top:784.1px;width:108px;height:18px;overflow:hidden;font-size:12.3px;line-height:12px;color:#383838;white-space:nowrap"><span class="sx" style="transform:scaleX(0.87)">2860-2863 : КР_+52.3</span></div>
<div class="t" style="left:791.8px;top:784.1px;width:103px;height:18px;overflow:hidden;font-size:12.3px;line-height:12px;color:#383838;white-space:nowrap"><span class="sx" style="transform:scaleX(0.87)">КР_+52.350_Кровля_</span></div>
<div class="a" style="left:128px;top:808px;width:1px;height:26px;background:#111"></div>
<div class="a" style="left:258px;top:808px;width:1px;height:26px;background:#111"></div>
<div class="a" style="left:445px;top:808px;width:1px;height:26px;background:#111"></div>
<div class="a" style="left:560px;top:808px;width:1px;height:26px;background:#111"></div>
<div class="a" style="left:674px;top:808px;width:1px;height:26px;background:#111"></div>
<div class="a" style="left:788px;top:808px;width:1px;height:26px;background:#111"></div>
<div class="a" style="left:1px;top:809px;width:126px;height:24px;background:#90ee90"></div>
<div class="a" style="left:130px;top:809px;width:127px;height:24px;background:#ff4500"></div>
<div class="a ucb" style="left:1.5px;top:813px"></div>
<div class="a ucb" style="left:130.29999999999995px;top:813px"></div>
<div class="a dd" style="left:260px;top:809px;width:184px;height:24px"></div>
<div class="t" style="left:268px;top:815.9px;font-size:12.3px;line-height:12px;color:#6a6d75;white-space:nowrap"><span class="sx" style="transform:scaleX(0.835)">MAP_2_5_1-3_KP_KM2.rvt</span></div>
<svg class="a" style="left:426px;top:817px" width="11" height="7" viewBox="-1 -1 11 7"><path d="M0 0 L4.6 4.4 L9.2 0" fill="none" stroke="#9a9eab" stroke-width="1.1"/></svg>
<div class="t" style="left:449.5px;top:811.1px;width:108px;height:18px;overflow:hidden;font-size:12.3px;line-height:12px;color:#383838;white-space:nowrap"><span class="sx" style="transform:scaleX(0.87)">318790990</span></div>
<div class="t" style="left:563.5px;top:811.1px;width:108px;height:18px;overflow:hidden;font-size:12.3px;line-height:12px;color:#383838;white-space:nowrap"><span class="sx" style="transform:scaleX(0.87)">с3. К4-И2</span></div>
<div class="t" style="left:677.3px;top:811.1px;width:108px;height:18px;overflow:hidden;font-size:12.3px;line-height:12px;color:#383838;white-space:nowrap"><span class="sx" style="transform:scaleX(0.87)">2860-2863 : КР_+52.3</span></div>
<div class="t" style="left:791.8px;top:811.1px;width:103px;height:18px;overflow:hidden;font-size:12.3px;line-height:12px;color:#383838;white-space:nowrap"><span class="sx" style="transform:scaleX(0.87)">КР_+52.350_Кровля_</span></div>
<div class="a" style="left:128px;top:835px;width:1px;height:26px;background:#111"></div>
<div class="a" style="left:258px;top:835px;width:1px;height:26px;background:#111"></div>
<div class="a" style="left:445px;top:835px;width:1px;height:26px;background:#111"></div>
<div class="a" style="left:560px;top:835px;width:1px;height:26px;background:#111"></div>
<div class="a" style="left:674px;top:835px;width:1px;height:26px;background:#111"></div>
<div class="a" style="left:788px;top:835px;width:1px;height:26px;background:#111"></div>
<div class="a" style="left:1px;top:836px;width:126px;height:24px;background:#90ee90"></div>
<div class="a" style="left:130px;top:836px;width:127px;height:24px;background:#ff4500"></div>
<div class="a ucb" style="left:1.5px;top:840px"></div>
<div class="a ucb" style="left:130.29999999999995px;top:840px"></div>
<div class="a dd" style="left:260px;top:836px;width:184px;height:24px"></div>
<div class="t" style="left:268px;top:842.9px;font-size:12.3px;line-height:12px;color:#6a6d75;white-space:nowrap"><span class="sx" style="transform:scaleX(0.835)">MAP_2_5_1-3_KP_KM2.rvt</span></div>
<svg class="a" style="left:426px;top:844px" width="11" height="7" viewBox="-1 -1 11 7"><path d="M0 0 L4.6 4.4 L9.2 0" fill="none" stroke="#9a9eab" stroke-width="1.1"/></svg>
<div class="t" style="left:449.5px;top:838.1px;width:108px;height:18px;overflow:hidden;font-size:12.3px;line-height:12px;color:#383838;white-space:nowrap"><span class="sx" style="transform:scaleX(0.87)">318790938</span></div>
<div class="t" style="left:563.5px;top:838.1px;width:108px;height:18px;overflow:hidden;font-size:12.3px;line-height:12px;color:#383838;white-space:nowrap"><span class="sx" style="transform:scaleX(0.87)">с3. К4-И2</span></div>
<div class="t" style="left:677.3px;top:838.1px;width:108px;height:18px;overflow:hidden;font-size:12.3px;line-height:12px;color:#383838;white-space:nowrap"><span class="sx" style="transform:scaleX(0.87)">2193-2195 : КР_+52.3</span></div>
<div class="t" style="left:791.8px;top:838.1px;width:103px;height:18px;overflow:hidden;font-size:12.3px;line-height:12px;color:#383838;white-space:nowrap"><span class="sx" style="transform:scaleX(0.87)">КР_+52.350_Кровля_</span></div>
<div class="a" style="left:128px;top:862px;width:1px;height:26px;background:#111"></div>
<div class="a" style="left:258px;top:862px;width:1px;height:26px;background:#111"></div>
<div class="a" style="left:445px;top:862px;width:1px;height:26px;background:#111"></div>
<div class="a" style="left:560px;top:862px;width:1px;height:26px;background:#111"></div>
<div class="a" style="left:674px;top:862px;width:1px;height:26px;background:#111"></div>
<div class="a" style="left:788px;top:862px;width:1px;height:26px;background:#111"></div>
<div class="a" style="left:1px;top:863px;width:126px;height:24px;background:#90ee90"></div>
<div class="a" style="left:130px;top:863px;width:127px;height:24px;background:#ff4500"></div>
<div class="a ucb" style="left:1.5px;top:867px"></div>
<div class="a ucb" style="left:130.29999999999995px;top:867px"></div>
<div class="a dd" style="left:260px;top:863px;width:184px;height:24px"></div>
<div class="t" style="left:268px;top:869.9px;font-size:12.3px;line-height:12px;color:#6a6d75;white-space:nowrap"><span class="sx" style="transform:scaleX(0.835)">MAP_2_5_1-3_KP_KM2.rvt</span></div>
<svg class="a" style="left:426px;top:871px" width="11" height="7" viewBox="-1 -1 11 7"><path d="M0 0 L4.6 4.4 L9.2 0" fill="none" stroke="#9a9eab" stroke-width="1.1"/></svg>
<div class="t" style="left:449.5px;top:865.1px;width:108px;height:18px;overflow:hidden;font-size:12.3px;line-height:12px;color:#383838;white-space:nowrap"><span class="sx" style="transform:scaleX(0.87)">318790932</span></div>
<div class="t" style="left:563.5px;top:865.1px;width:108px;height:18px;overflow:hidden;font-size:12.3px;line-height:12px;color:#383838;white-space:nowrap"><span class="sx" style="transform:scaleX(0.87)">с3. К4-И2</span></div>
<div class="t" style="left:677.3px;top:865.1px;width:108px;height:18px;overflow:hidden;font-size:12.3px;line-height:12px;color:#383838;white-space:nowrap"><span class="sx" style="transform:scaleX(0.87)">2194-2197 : КР_+52.3</span></div>
<div class="t" style="left:791.8px;top:865.1px;width:103px;height:18px;overflow:hidden;font-size:12.3px;line-height:12px;color:#383838;white-space:nowrap"><span class="sx" style="transform:scaleX(0.87)">КР_+52.350_Кровля_</span></div>
<div class="a" style="left:446px;top:889px;width:449px;height:26px;background:#0a74d8"></div>
<div class="a" style="left:260px;top:889px;width:185px;height:26px;background:#0a74d8"></div>
<div class="a" style="left:128px;top:889px;width:1px;height:26px;background:#111"></div>
<div class="a" style="left:258px;top:889px;width:1px;height:26px;background:#111"></div>
<div class="a" style="left:445px;top:889px;width:1px;height:26px;background:#111"></div>
<div class="a" style="left:560px;top:889px;width:1px;height:26px;background:#111"></div>
<div class="a" style="left:674px;top:889px;width:1px;height:26px;background:#111"></div>
<div class="a" style="left:788px;top:889px;width:1px;height:26px;background:#111"></div>
<div class="a" style="left:445px;top:889px;width:116px;height:26px;border:1.5px solid #111;box-sizing:border-box"></div>
<div class="a" style="left:1px;top:890px;width:126px;height:24px;background:#90ee90"></div>
<div class="a" style="left:130px;top:890px;width:127px;height:24px;background:#ff4500"></div>
<div class="a" style="left:0px;top:889px;width:128px;height:26px;border:1px solid #0a6fd6;box-sizing:border-box"></div>
<div class="a" style="left:129px;top:889px;width:130px;height:26px;border:1px solid #0a6fd6;box-sizing:border-box"></div>
<div class="a" style="left:127px;top:889px;width:2px;height:26px;background:#111"></div>
<div class="a ucb" style="left:1.5px;top:894px"></div>
<div class="a ucb" style="left:130.29999999999995px;top:894px"></div>
<div class="a dd" style="left:260px;top:890px;width:184px;height:24px"></div>
<div class="t" style="left:268px;top:897.2px;font-size:11.6px;line-height:12px;color:#30343e;font-weight:700;white-space:nowrap">MAP_2_5_1-3_KP_KM2.rvt</div>
<svg class="a" style="left:426px;top:898px" width="11" height="7" viewBox="-1 -1 11 7"><path d="M0 0 L4.6 4.4 L9.2 0" fill="none" stroke="#9a9eab" stroke-width="1.1"/></svg>
<div class="t" style="left:449.5px;top:893px;width:108px;height:18px;overflow:hidden;font-size:12.2px;line-height:12px;color:#fff;font-weight:700;white-space:nowrap">318790987</div>
<div class="t" style="left:563.5px;top:893px;width:108px;height:18px;overflow:hidden;font-size:12.2px;line-height:12px;color:#fff;font-weight:700;white-space:nowrap">с3. К4-И2</div>
<div class="t" style="left:677.3px;top:893px;width:108px;height:18px;overflow:hidden;font-size:12.2px;line-height:12px;color:#fff;font-weight:700;white-space:nowrap">2194-2197 : КР_+52.3</div>
<div class="t" style="left:791.8px;top:893px;width:103px;height:18px;overflow:hidden;font-size:12.2px;line-height:12px;color:#fff;font-weight:700;white-space:nowrap">КР_+52.350_Кровля_</div>
<div class="a" style="left:128px;top:916px;width:1px;height:26px;background:#111"></div>
<div class="a" style="left:258px;top:916px;width:1px;height:26px;background:#111"></div>
<div class="a" style="left:445px;top:916px;width:1px;height:26px;background:#111"></div>
<div class="a" style="left:560px;top:916px;width:1px;height:26px;background:#111"></div>
<div class="a" style="left:674px;top:916px;width:1px;height:26px;background:#111"></div>
<div class="a" style="left:788px;top:916px;width:1px;height:26px;background:#111"></div>
<div class="a" style="left:1px;top:917px;width:126px;height:24px;background:#90ee90"></div>
<div class="a" style="left:130px;top:917px;width:127px;height:24px;background:#ff4500"></div>
<div class="a ucb" style="left:1.5px;top:921px"></div>
<div class="a ucb" style="left:130.29999999999995px;top:921px"></div>
<div class="a dd" style="left:260px;top:917px;width:184px;height:24px"></div>
<div class="t" style="left:268px;top:923.9px;font-size:12.3px;line-height:12px;color:#6a6d75;white-space:nowrap"><span class="sx" style="transform:scaleX(0.835)">MAP_2_5_1-3_KP_KM2.rvt</span></div>
<svg class="a" style="left:426px;top:925px" width="11" height="7" viewBox="-1 -1 11 7"><path d="M0 0 L4.6 4.4 L9.2 0" fill="none" stroke="#9a9eab" stroke-width="1.1"/></svg>
<div class="t" style="left:449.5px;top:919.1px;width:108px;height:18px;overflow:hidden;font-size:12.3px;line-height:12px;color:#383838;white-space:nowrap"><span class="sx" style="transform:scaleX(0.87)"></span></div>
<div class="t" style="left:563.5px;top:919.1px;width:108px;height:18px;overflow:hidden;font-size:12.3px;line-height:12px;color:#383838;white-space:nowrap"><span class="sx" style="transform:scaleX(0.87)"></span></div>
<div class="t" style="left:677.3px;top:919.1px;width:108px;height:18px;overflow:hidden;font-size:12.3px;line-height:12px;color:#383838;white-space:nowrap"><span class="sx" style="transform:scaleX(0.87)"></span></div>
<div class="t" style="left:791.8px;top:919.1px;width:103px;height:18px;overflow:hidden;font-size:12.3px;line-height:12px;color:#383838;white-space:nowrap"><span class="sx" style="transform:scaleX(0.87)"></span></div>
</div>
<div class="a" style="left:1483px;top:149px;width:8px;height:919px;background:#e8eaf5"></div>
<div class="a" style="left:1483px;top:149px;width:8px;height:473px;background:#d0d6e4;border-radius:4px"></div>
<svg class="a" style="left:1504px;top:53px" width="7" height="10" viewBox="0 0 7 10"><path d="M5.5 0.8 L1.3 4.8 L5.5 8.8" fill="none" stroke="#5b6070" stroke-width="1.1"/></svg>
<div class="t" style="left:1500.5px;top:68px;font-size:11.9px;line-height:12px;color:#545a68;transform-origin:0 0;transform:rotate(90deg) translate(0,-11.5px);white-space:nowrap">Детали коллизии</div>
<div class="t " style="left:1525.5px;top:53.20px;font-size:11.7px;line-height:11.7px;color:#4a5060;font-weight:400;">Коллизия - 318790987</div>
<div class="a" style="left:1527px;top:75px;width:371px;height:389px;border:1px solid #d6dde7;border-radius:5px;box-sizing:border-box"></div>
<div class="a" style="left:1531px;top:69px;width:120px;height:12px;background:#fff"></div>
<div class="t " style="left:1534px;top:69.70px;font-size:11.7px;line-height:11.7px;color:#2e323b;font-weight:400;">Элементы коллизии:</div>
<div class="a" style="left:1531px;top:83px;width:362px;height:374px;border:1px solid #e6e9f1;border-radius:8px;box-sizing:border-box;background:#fff"></div>
<div class="a" style="left:1532px;top:84px;width:360px;height:31px;background:#f7f8fc;border-radius:7px 7px 0 0"></div>
<div class="a" style="left:1532px;top:115px;width:360px;height:1px;background:#d9deea"></div>
<div class="t " style="left:1664px;top:93.91px;font-size:13.1px;line-height:13.1px;color:#30343e;font-weight:700;">Элемент 1</div>
<div class="t " style="left:1784.3px;top:93.91px;font-size:13.1px;line-height:13.1px;color:#30343e;font-weight:700;">Элемент 2</div>
<div class="a" style="left:1533px;top:117px;width:118px;height:29px;background:#f2f2f2"></div>
<div class="a" style="left:1653px;top:117px;width:118px;height:29px;background:#db7093"></div>
<div class="a" style="left:1773px;top:117px;width:118px;height:29px;background:#20b2aa"></div>
<div class="t " style="left:1537.5px;top:124.10px;font-size:11.1px;line-height:11.1px;color:#222;font-weight:400;">Расположение</div>
<div class="t" style="left:1653px;top:125.5px;width:118px;text-align:center;font-size:11.1px;line-height:12px;color:#222;white-space:nowrap">Связанный файл</div>
<div class="t" style="left:1773px;top:125.5px;width:118px;text-align:center;font-size:11.1px;line-height:12px;color:#222;white-space:nowrap">Текущий файл</div>
<div class="a" style="left:1533px;top:149px;width:118px;height:29px;background:#f2f2f2"></div>
<div class="a" style="left:1653px;top:149px;width:118px;height:29px;background:#db7093"></div>
<div class="a" style="left:1773px;top:149px;width:118px;height:29px;background:#20b2aa"></div>
<div class="t " style="left:1537.5px;top:156.10px;font-size:11.1px;line-height:11.1px;color:#222;font-weight:400;">Категория</div>
<div class="t" style="left:1653px;top:157.5px;width:118px;text-align:center;font-size:11.1px;line-height:12px;color:#222;white-space:nowrap">Каркас несущий</div>
<div class="t" style="left:1773px;top:157.5px;width:118px;text-align:center;font-size:11.1px;line-height:12px;color:#222;white-space:nowrap">Воздуховоды</div>
<div class="a" style="left:1533px;top:181px;width:118px;height:55px;background:#f2f2f2"></div>
<div class="a" style="left:1653px;top:181px;width:118px;height:55px;background:#db7093"></div>
<div class="a" style="left:1773px;top:181px;width:118px;height:55px;background:#20b2aa"></div>
<div class="t " style="left:1537.5px;top:188.10px;font-size:11.1px;line-height:11.1px;color:#222;font-weight:400;">Семейство</div>
<div class="t" style="left:1658px;top:185px;font-size:11.1px;line-height:16px;color:#222;white-space:nowrap">355_Прокат Лист<br>(НесКаркас_РабПлос<br>к)</div>
<div class="t" style="left:1778px;top:193.5px;font-size:11.1px;line-height:16px;color:#222;white-space:nowrap">Воздуховод круглого<br>сечения</div>
<div class="a" style="left:1533px;top:240px;width:118px;height:56px;background:#f2f2f2"></div>
<div class="a" style="left:1653px;top:240px;width:118px;height:56px;background:#db7093"></div>
<div class="a" style="left:1773px;top:240px;width:118px;height:56px;background:#20b2aa"></div>
<div class="t " style="left:1537.5px;top:247.10px;font-size:11.1px;line-height:11.1px;color:#222;font-weight:400;">Тип</div>
<div class="t" style="left:1658px;top:244px;font-size:11.1px;line-height:16px;color:#222;white-space:nowrap">355_Прокат Лист<br>(НесКаркас_РабПлос<br>к)</div>
<div class="t" style="left:1789px;top:245.0px;font-size:11.1px;line-height:16px;color:#222;white-space:nowrap">ASML_ОВ_Сталь<br>δ=0.8_ГОСТ<br>14918-80_Врезки</div>
<div class="a" style="left:1533px;top:299px;width:118px;height:28px;background:#f2f2f2"></div>
<div class="a" style="left:1653px;top:299px;width:118px;height:28px;background:#db7093"></div>
<div class="a" style="left:1773px;top:299px;width:118px;height:28px;background:#20b2aa"></div>
<div class="t " style="left:1537.5px;top:306.10px;font-size:11.1px;line-height:11.1px;color:#222;font-weight:400;">Id элемента</div>
<div class="t" style="left:1653px;top:307.0px;width:118px;text-align:center;font-size:11.1px;line-height:12px;color:#222;white-space:nowrap">4614207</div>
<div class="t" style="left:1773px;top:307.0px;width:118px;text-align:center;font-size:11.1px;line-height:12px;color:#222;white-space:nowrap">15327030</div>
<div class="a" style="left:1533px;top:331px;width:118px;height:39px;background:#f2f2f2"></div>
<div class="a" style="left:1653px;top:331px;width:118px;height:39px;background:#db7093"></div>
<div class="a" style="left:1773px;top:331px;width:118px;height:39px;background:#20b2aa"></div>
<div class="t " style="left:1537.5px;top:338.10px;font-size:11.1px;line-height:11.1px;color:#222;font-weight:400;">Рабочий набор</div>
<div class="t" style="left:1653px;top:344.5px;width:118px;text-align:center;font-size:11.1px;line-height:12px;color:#222;white-space:nowrap">Металл</div>
<div class="t" style="left:1784px;top:335.5px;font-size:11.1px;line-height:16px;color:#222;white-space:nowrap">ASML_Вентиляция<br>жилой части</div>
<div class="a" style="left:1533px;top:374px;width:118px;height:40px;background:#f2f2f2"></div>
<div class="a" style="left:1653px;top:374px;width:118px;height:40px;background:#db7093"></div>
<div class="a" style="left:1773px;top:374px;width:118px;height:40px;background:#20b2aa"></div>
<div class="t " style="left:1537.5px;top:381.10px;font-size:11.1px;line-height:11.1px;color:#222;font-weight:400;">Файл</div>
<div class="t" style="left:1659px;top:378px;font-size:10.4px;line-height:16px;color:#222;white-space:nowrap">MAP_2_5_1-3_KP_KM<br>2.rvt</div>
<div class="t" style="left:1773px;top:388.0px;width:118px;text-align:center;font-size:10.6px;line-height:12px;color:#222;white-space:nowrap">MAP_2_5_1-3_OB2.rvt</div>
<div class="a" style="left:1533px;top:417px;width:118px;height:39px;background:#f2f2f2"></div>
<div class="a" style="left:1653px;top:417px;width:118px;height:39px;background:#db7093"></div>
<div class="a" style="left:1773px;top:417px;width:118px;height:39px;background:#20b2aa"></div>
<div class="t " style="left:1537.5px;top:424.20px;font-size:11.1px;line-height:11.1px;color:#222;font-weight:400;">Количество</div>
<div class="t " style="left:1537.5px;top:440.20px;font-size:11.1px;line-height:11.1px;color:#222;font-weight:400;">коллизий</div>
<div class="t" style="left:1653px;top:430.5px;width:118px;text-align:center;font-size:11.1px;line-height:12px;color:#222;white-space:nowrap">0</div>
<div class="t" style="left:1773px;top:430.5px;width:118px;text-align:center;font-size:11.1px;line-height:12px;color:#222;white-space:nowrap">0</div>
<div class="a" style="left:1526px;top:476px;width:221px;height:37px;border:1px solid #d6dde7;border-radius:4px;box-sizing:border-box"></div>
<div class="a" style="left:1531px;top:470px;width:211px;height:12px;background:#fff"></div>
<div class="t " style="left:1534.3px;top:469.93px;font-size:11.9px;line-height:11.9px;color:#2e323b;font-weight:400;white-space:nowrap">Комментарий к статусу &#39;Не коллизия&#39;</div>
<div class="a" style="left:1531px;top:482.5px;width:211px;height:25.5px;background:#e9ebf5;border:1px solid #c8cde0;border-radius:9px;box-sizing:border-box"></div>
<div class="a" style="left:1526px;top:524.5px;width:218px;height:37px;border:1px solid #d6dde7;border-radius:4px;box-sizing:border-box"></div>
<div class="a" style="left:1531px;top:518.5px;width:208px;height:12px;background:#fff"></div>
<div class="t " style="left:1534.3px;top:518.43px;font-size:11.9px;line-height:11.9px;color:#2e323b;font-weight:400;white-space:nowrap">Комментарий к статусу &#39;Устранить в&#39;</div>
<div class="a" style="left:1531px;top:531.5px;width:207px;height:25.5px;background:#e9ebf5;border:1px solid #c8cde0;border-radius:9px;box-sizing:border-box"></div>
<svg class="a" style="left:1662px;top:705px" width="21" height="27" viewBox="0 0 21 27"><path d="M6.8 15.3 V2.6 C6.8 0.8 9.6 0.8 9.6 2.6 V6.6 C9.6 6 12.4 6 12.4 7.2 C12.4 6.8 15.4 6.8 15.4 8 C15.4 7.6 18.6 7.6 18.6 9 V17.5 C18.6 21.8 15.6 24.6 11.5 24.6 C8.5 24.6 6.8 22.8 5.3 20.5 L1.9 15.8 C1.2 14.8 1.8 13 3.4 13.2 C4.6 13.3 5.6 14.3 6.8 15.3 Z" fill="#fff" stroke="#111522" stroke-width="1.15" stroke-linejoin="round"/><path d="M9.6 6.6 V11.6 M12.4 7.2 V11.8 M15.4 8 V12.1" stroke="#111522" stroke-width="1.1" fill="none" stroke-linecap="round"/></svg>
</div></body></html>
